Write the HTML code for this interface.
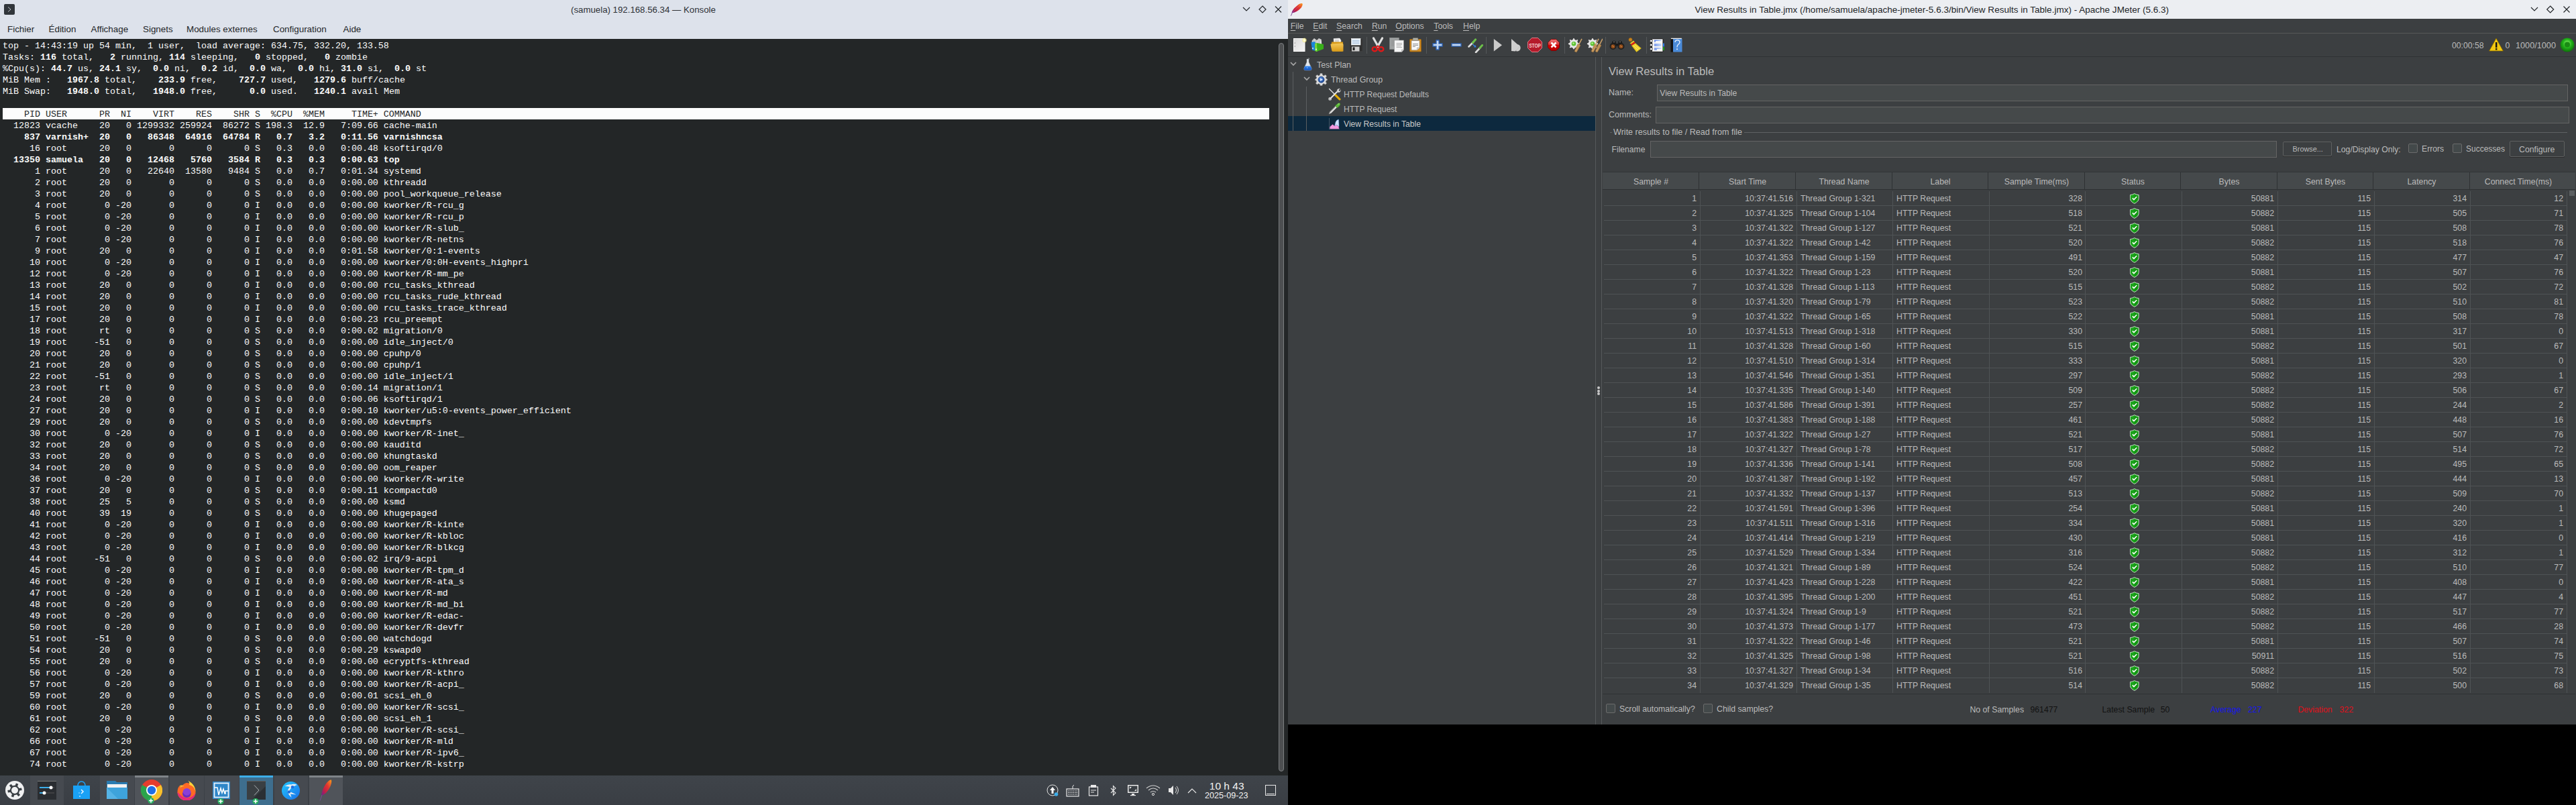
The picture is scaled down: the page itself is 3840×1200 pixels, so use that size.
<!DOCTYPE html>
<html><head><meta charset="utf-8"><title>screen</title>
<style>
*{box-sizing:border-box}
html,body{margin:0;padding:0;width:3840px;height:1200px;overflow:hidden;background:#000}
.a{position:absolute}
.t{position:absolute;white-space:pre;line-height:1}
.mono{font-family:"Liberation Mono",monospace}
.sans{font-family:"Liberation Sans",sans-serif}
#kon{left:0;top:0;width:1920px;height:1156px;background:#232627}
#kbar{left:0;top:0;width:1920px;height:58px;background:#dde2eb}
#term{left:0;top:58px;width:1920px;height:1098px;background:#232627;overflow:hidden}
.ln{position:absolute;left:4px;height:17px;white-space:pre;font-family:"Liberation Mono",monospace;font-size:13.333px;line-height:17px;color:#fcfcfc}
.ln b{font-weight:bold}
.hdr{background:#fcfcfc;color:#232627;width:1888px}
#jm{left:1920px;top:0;width:1920px;height:1080px;background:#3c3f41}
.jt{font-family:"Liberation Sans",sans-serif;font-size:12.3px;color:#bbbbbb}
.cell{position:absolute;white-space:pre;font-family:"Liberation Sans",sans-serif;font-size:12.3px;color:#bbbbbb;line-height:22px;height:22px}
</style></head><body>
<div id="kon" class="a"><div id="kbar" class="a"><div class="a" style="left:6px;top:6px;width:16px;height:16px;background:#31363b;border-radius:2px"></div><svg class="a" style="left:6px;top:6px" width="16" height="16"><path d="M6 4.5 L10 8 L6 11.5" fill="none" stroke="#bfc4c8" stroke-width="1"/></svg><div class="t sans" style="left:851px;top:8.2px;font-size:13.26px;color:#2d3136">(samuela) 192.168.56.34 — Konsole</div><svg class="a" style="left:1849px;top:6px" width="70" height="16"><path d="M4 5 L9 10 L14 5" fill="none" stroke="#232629" stroke-width="1.2"/><path d="M33 3 L38 8 L33 13 L28 8 Z" fill="none" stroke="#232629" stroke-width="1.2"/><path d="M52 3.5 L61 12.5 M61 3.5 L52 12.5" fill="none" stroke="#232629" stroke-width="1.2"/></svg><div class="t sans" style="left:11px;top:37px;font-size:13.4px;color:#232629">Fichier</div><div class="t sans" style="left:72.5px;top:37px;font-size:13.4px;color:#232629">Édition</div><div class="t sans" style="left:135.5px;top:37px;font-size:13.4px;color:#232629">Affichage</div><div class="t sans" style="left:213px;top:37px;font-size:13.4px;color:#232629">Signets</div><div class="t sans" style="left:278px;top:37px;font-size:13.4px;color:#232629">Modules externes</div><div class="t sans" style="left:407px;top:37px;font-size:13.4px;color:#232629">Configuration</div><div class="t sans" style="left:511.5px;top:37px;font-size:13.4px;color:#232629">Aide</div></div><div id="term" class="a"><div class="ln" style="top:2px">top - 14:43:19 up 54 min,  1 user,  load average: 634.75, 332.20, 133.58</div><div class="ln" style="top:19px">Tasks: <b>116</b> total,   <b>2</b> running, <b>114</b> sleeping,   <b>0</b> stopped,   <b>0</b> zombie</div><div class="ln" style="top:36px">%Cpu(s): <b>44.7</b> us, <b>24.1</b> sy,  <b>0.0</b> ni,  <b>0.2</b> id,  <b>0.0</b> wa,  <b>0.0</b> hi, <b>31.0</b> si,  <b>0.0</b> st</div><div class="ln" style="top:53px">MiB Mem :   <b>1967.8</b> total,    <b>233.9</b> free,    <b>727.7</b> used,   <b>1279.6</b> buff/cache</div><div class="ln" style="top:70px">MiB Swap:   <b>1948.0</b> total,   <b>1948.0</b> free,      <b>0.0</b> used.   <b>1240.1</b> avail Mem</div><div class="a" style="left:4px;top:103px;width:1888px;height:17px;background:#fcfcfc"></div><div class="ln" style="top:104px;color:#232627">    PID USER      PR  NI    VIRT    RES    SHR S  %CPU  %MEM     TIME+ COMMAND</div><div class="ln" style="top:121px">  12823 vcache    20   0 1299332 259924  86272 S 198.3  12.9   7:09.66 cache-main</div><div class="ln" style="top:138px"><b>    837 varnish+  20   0   86348  64916  64784 R   0.7   3.2   0:11.56 varnishncsa</b></div><div class="ln" style="top:155px">     16 root      20   0       0      0      0 S   0.3   0.0   0:00.48 ksoftirqd/0</div><div class="ln" style="top:172px"><b>  13350 samuela   20   0   12468   5760   3584 R   0.3   0.3   0:00.63 top</b></div><div class="ln" style="top:189px">      1 root      20   0   22640  13580   9484 S   0.0   0.7   0:01.34 systemd</div><div class="ln" style="top:206px">      2 root      20   0       0      0      0 S   0.0   0.0   0:00.00 kthreadd</div><div class="ln" style="top:223px">      3 root      20   0       0      0      0 S   0.0   0.0   0:00.00 pool_workqueue_release</div><div class="ln" style="top:240px">      4 root       0 -20       0      0      0 I   0.0   0.0   0:00.00 kworker/R-rcu_g</div><div class="ln" style="top:257px">      5 root       0 -20       0      0      0 I   0.0   0.0   0:00.00 kworker/R-rcu_p</div><div class="ln" style="top:274px">      6 root       0 -20       0      0      0 I   0.0   0.0   0:00.00 kworker/R-slub_</div><div class="ln" style="top:291px">      7 root       0 -20       0      0      0 I   0.0   0.0   0:00.00 kworker/R-netns</div><div class="ln" style="top:308px">      9 root      20   0       0      0      0 I   0.0   0.0   0:01.58 kworker/0:1-events</div><div class="ln" style="top:325px">     10 root       0 -20       0      0      0 I   0.0   0.0   0:00.00 kworker/0:0H-events_highpri</div><div class="ln" style="top:342px">     12 root       0 -20       0      0      0 I   0.0   0.0   0:00.00 kworker/R-mm_pe</div><div class="ln" style="top:359px">     13 root      20   0       0      0      0 I   0.0   0.0   0:00.00 rcu_tasks_kthread</div><div class="ln" style="top:376px">     14 root      20   0       0      0      0 I   0.0   0.0   0:00.00 rcu_tasks_rude_kthread</div><div class="ln" style="top:393px">     15 root      20   0       0      0      0 I   0.0   0.0   0:00.00 rcu_tasks_trace_kthread</div><div class="ln" style="top:410px">     17 root      20   0       0      0      0 I   0.0   0.0   0:00.23 rcu_preempt</div><div class="ln" style="top:427px">     18 root      rt   0       0      0      0 S   0.0   0.0   0:00.02 migration/0</div><div class="ln" style="top:444px">     19 root     -51   0       0      0      0 S   0.0   0.0   0:00.00 idle_inject/0</div><div class="ln" style="top:461px">     20 root      20   0       0      0      0 S   0.0   0.0   0:00.00 cpuhp/0</div><div class="ln" style="top:478px">     21 root      20   0       0      0      0 S   0.0   0.0   0:00.00 cpuhp/1</div><div class="ln" style="top:495px">     22 root     -51   0       0      0      0 S   0.0   0.0   0:00.00 idle_inject/1</div><div class="ln" style="top:512px">     23 root      rt   0       0      0      0 S   0.0   0.0   0:00.14 migration/1</div><div class="ln" style="top:529px">     24 root      20   0       0      0      0 S   0.0   0.0   0:00.06 ksoftirqd/1</div><div class="ln" style="top:546px">     27 root      20   0       0      0      0 I   0.0   0.0   0:00.10 kworker/u5:0-events_power_efficient</div><div class="ln" style="top:563px">     29 root      20   0       0      0      0 S   0.0   0.0   0:00.00 kdevtmpfs</div><div class="ln" style="top:580px">     30 root       0 -20       0      0      0 I   0.0   0.0   0:00.00 kworker/R-inet_</div><div class="ln" style="top:597px">     32 root      20   0       0      0      0 S   0.0   0.0   0:00.00 kauditd</div><div class="ln" style="top:614px">     33 root      20   0       0      0      0 S   0.0   0.0   0:00.00 khungtaskd</div><div class="ln" style="top:631px">     34 root      20   0       0      0      0 S   0.0   0.0   0:00.00 oom_reaper</div><div class="ln" style="top:648px">     36 root       0 -20       0      0      0 I   0.0   0.0   0:00.00 kworker/R-write</div><div class="ln" style="top:665px">     37 root      20   0       0      0      0 S   0.0   0.0   0:00.11 kcompactd0</div><div class="ln" style="top:682px">     38 root      25   5       0      0      0 S   0.0   0.0   0:00.00 ksmd</div><div class="ln" style="top:699px">     40 root      39  19       0      0      0 S   0.0   0.0   0:00.00 khugepaged</div><div class="ln" style="top:716px">     41 root       0 -20       0      0      0 I   0.0   0.0   0:00.00 kworker/R-kinte</div><div class="ln" style="top:733px">     42 root       0 -20       0      0      0 I   0.0   0.0   0:00.00 kworker/R-kbloc</div><div class="ln" style="top:750px">     43 root       0 -20       0      0      0 I   0.0   0.0   0:00.00 kworker/R-blkcg</div><div class="ln" style="top:767px">     44 root     -51   0       0      0      0 S   0.0   0.0   0:00.02 irq/9-acpi</div><div class="ln" style="top:784px">     45 root       0 -20       0      0      0 I   0.0   0.0   0:00.00 kworker/R-tpm_d</div><div class="ln" style="top:801px">     46 root       0 -20       0      0      0 I   0.0   0.0   0:00.00 kworker/R-ata_s</div><div class="ln" style="top:818px">     47 root       0 -20       0      0      0 I   0.0   0.0   0:00.00 kworker/R-md</div><div class="ln" style="top:835px">     48 root       0 -20       0      0      0 I   0.0   0.0   0:00.00 kworker/R-md_bi</div><div class="ln" style="top:852px">     49 root       0 -20       0      0      0 I   0.0   0.0   0:00.00 kworker/R-edac-</div><div class="ln" style="top:869px">     50 root       0 -20       0      0      0 I   0.0   0.0   0:00.00 kworker/R-devfr</div><div class="ln" style="top:886px">     51 root     -51   0       0      0      0 S   0.0   0.0   0:00.00 watchdogd</div><div class="ln" style="top:903px">     54 root      20   0       0      0      0 S   0.0   0.0   0:00.29 kswapd0</div><div class="ln" style="top:920px">     55 root      20   0       0      0      0 S   0.0   0.0   0:00.00 ecryptfs-kthread</div><div class="ln" style="top:937px">     56 root       0 -20       0      0      0 I   0.0   0.0   0:00.00 kworker/R-kthro</div><div class="ln" style="top:954px">     57 root       0 -20       0      0      0 I   0.0   0.0   0:00.00 kworker/R-acpi_</div><div class="ln" style="top:971px">     59 root      20   0       0      0      0 S   0.0   0.0   0:00.01 scsi_eh_0</div><div class="ln" style="top:988px">     60 root       0 -20       0      0      0 I   0.0   0.0   0:00.00 kworker/R-scsi_</div><div class="ln" style="top:1005px">     61 root      20   0       0      0      0 S   0.0   0.0   0:00.00 scsi_eh_1</div><div class="ln" style="top:1022px">     62 root       0 -20       0      0      0 I   0.0   0.0   0:00.00 kworker/R-scsi_</div><div class="ln" style="top:1039px">     66 root       0 -20       0      0      0 I   0.0   0.0   0:00.00 kworker/R-mld</div><div class="ln" style="top:1056px">     67 root       0 -20       0      0      0 I   0.0   0.0   0:00.00 kworker/R-ipv6_</div><div class="ln" style="top:1073px">     74 root       0 -20       0      0      0 I   0.0   0.0   0:00.00 kworker/R-kstrp</div><div class="a" style="left:1906px;top:6px;width:8px;height:1086px;border:1px solid #7b7e80;border-radius:5px;background:#4d4f51"></div></div></div><div class="a" style="left:1920px;top:0px;width:1920px;height:1080px;background:#3c3f41;"></div><div class="a" style="left:1920px;top:0px;width:1920px;height:28px;background:#eceef2;"></div><svg class="a" style="left:1922px;top:3px" width="22" height="22" viewBox="0 0 22 22"><defs><linearGradient id="fg" x1="0" y1="1" x2="1" y2="0"><stop offset="0" stop-color="#6d1f8f"/><stop offset="0.3" stop-color="#c01f48"/><stop offset="0.6" stop-color="#e0352f"/><stop offset="1" stop-color="#f99b1c"/></linearGradient></defs><path d="M3.6 16.2 C3.8 12.5 8 8.2 11.8 5.2 C14.6 3 17.2 1.8 19.2 2.2 C20.4 3.4 19.4 6.6 16.4 9.8 C13 13.2 8.2 16.2 3.6 16.2Z" fill="url(#fg)"/><path d="M2.4 20.6 L4.6 15.4" stroke="#7d4a9a" stroke-width="1"/><path d="M5 15 C9 11 13 7 17.5 3.5" stroke="#f7c0c0" stroke-width="0.4" opacity="0.6" fill="none"/></svg><div class="t sans" style="left:2526.40px;top:7.54px;font-size:13.54px;color:#232629;">View Results in Table.jmx (/home/samuela/apache-jmeter-5.6.3/bin/View Results in Table.jmx) - Apache JMeter (5.6.3)</div><svg class="a" style="left:3770px;top:6px" width="70" height="16"><path d="M3 5 L8 10 L13 5" fill="none" stroke="#232629" stroke-width="1.2"/><path d="M31.7 3 L36.7 8 L31.7 13 L26.7 8 Z" fill="none" stroke="#232629" stroke-width="1.2"/><path d="M51.5 3.5 L60.5 12.5 M60.5 3.5 L51.5 12.5" fill="none" stroke="#232629" stroke-width="1.2"/></svg><div class="t sans" style="left:1923.70px;top:32.59px;font-size:12.3px;color:#bbbbbb;"><span style="text-decoration:underline;text-underline-offset:2px">F</span>ile</div><div class="t sans" style="left:1957.30px;top:32.59px;font-size:12.3px;color:#bbbbbb;"><span style="text-decoration:underline;text-underline-offset:2px">E</span>dit</div><div class="t sans" style="left:1992.00px;top:32.59px;font-size:12.3px;color:#bbbbbb;"><span style="text-decoration:underline;text-underline-offset:2px">S</span>earch</div><div class="t sans" style="left:2044.90px;top:32.59px;font-size:12.3px;color:#bbbbbb;"><span style="text-decoration:underline;text-underline-offset:2px">R</span>un</div><div class="t sans" style="left:2080.30px;top:32.59px;font-size:12.3px;color:#bbbbbb;"><span style="text-decoration:underline;text-underline-offset:2px">O</span>ptions</div><div class="t sans" style="left:2137.30px;top:32.59px;font-size:12.3px;color:#bbbbbb;"><span style="text-decoration:underline;text-underline-offset:2px">T</span>ools</div><div class="t sans" style="left:2181.00px;top:32.59px;font-size:12.3px;color:#bbbbbb;"><span style="text-decoration:underline;text-underline-offset:2px">H</span>elp</div><div class="a" style="left:1920px;top:49px;width:1920px;height:1px;background:#575859;"></div><div class="a" style="left:1920px;top:84px;width:1920px;height:1px;background:#2f3234;"></div><div class="a" style="left:2126px;top:55px;width:1px;height:25px;background:#55585a;"></div><div class="a" style="left:2037px;top:55px;width:1px;height:25px;background:#55585a;"></div><div class="a" style="left:2215px;top:55px;width:1px;height:25px;background:#55585a;"></div><div class="a" style="left:2332px;top:55px;width:1px;height:25px;background:#55585a;"></div><div class="a" style="left:2393px;top:55px;width:1px;height:25px;background:#55585a;"></div><div class="a" style="left:2454px;top:55px;width:1px;height:25px;background:#55585a;"></div><svg class="a" width="0" height="0" style="left:0;top:0"><defs><linearGradient id="gNew" x1="0" y1="0" x2="1" y2="1"><stop offset="0" stop-color="#d9d9d9"/><stop offset="1" stop-color="#f4f4f4"/></linearGradient><radialGradient id="gGlow"><stop offset="0" stop-color="#ffffff"/><stop offset="0.45" stop-color="#fff7b0"/><stop offset="1" stop-color="#e8dc60" stop-opacity="0"/></radialGradient><linearGradient id="gFold" x1="0" y1="0" x2="0" y2="1"><stop offset="0" stop-color="#f3c75a"/><stop offset="1" stop-color="#d89a18"/></linearGradient><linearGradient id="gStop" x1="0" y1="0" x2="0" y2="1"><stop offset="0" stop-color="#ee7a7a"/><stop offset="0.45" stop-color="#d93a3a"/><stop offset="0.55" stop-color="#cc0000"/><stop offset="1" stop-color="#b80000"/></linearGradient><linearGradient id="gBlue" x1="0" y1="0" x2="1" y2="0"><stop offset="0" stop-color="#0040e0"/><stop offset="1" stop-color="#9cc4ff"/></linearGradient></defs></svg><svg class="a" style="left:1927px;top:56px" width="22" height="22" viewBox="0 0 22 22"><rect x="1.5" y="1.5" width="16.5" height="19" fill="url(#gNew)" stroke="#ffffff" stroke-width="1"/><circle cx="3.3" cy="8" r="0.6" fill="#555"/><circle cx="3.3" cy="13" r="0.6" fill="#555"/><circle cx="17.5" cy="4" r="4" fill="url(#gGlow)"/></svg><svg class="a" style="left:1954px;top:56px" width="20" height="22" viewBox="0 0 20 22"><path d="M1.5 5 L5 1 L9 4 L12 1 L16 3 L15 12 L3 12Z" fill="#d2d2d2"/><path d="M4 2 L5 9 M7 2.5 L8 9 M12 2 L12.5 9" stroke="#aaa" stroke-width="0.7"/><path d="M0.5 7 L6 6 L7.5 9 L7.5 20 L2 18.5 Z" fill="#1a86d9"/><path d="M15 5 L15.5 10" stroke="#e8e8e8" stroke-width="1.5"/><path d="M6 9 L9 8 L19 10 L19 17 L8.5 21 L6.5 20Z" fill="#39b01a"/><path d="M6 9 L9 8 L9.5 21 L6.5 20Z" fill="#7ad63b"/><circle cx="3" cy="16" r="0.9" fill="#fff"/><circle cx="8" cy="17.5" r="0.9" fill="#fff"/></svg><svg class="a" style="left:1983px;top:56px" width="21" height="22" viewBox="0 0 21 22"><path d="M5 1.5 L14 1 L16 4 L15.5 12 L5.5 12Z" fill="#f5f5f5" stroke="#ddd" stroke-width="0.5"/><path d="M7 4 H13 M7 6 H13 M7 8.5 H13" stroke="#9a9a9a" stroke-width="0.7"/><path d="M2 6.5 L19 6.5 L19.5 20.5 L3 20.5 L1.5 14Z" fill="#d89a18"/><path d="M0.5 10.5 Q0 9.5 1.5 9.5 L17 8.5 Q19.5 8.5 19.5 11 L19 19.5 Q19 20.7 17.5 20.7 L4 20.7 Q2.5 20.7 2.2 19Z" fill="url(#gFold)"/></svg><svg class="a" style="left:2011px;top:56px" width="20" height="22" viewBox="0 0 20 22"><path d="M1 1.5 H19 L20 2.5 V20.5 H1Z" fill="#2f2f2f" stroke="#444" stroke-width="0.6"/><rect x="3.5" y="1.5" width="13.5" height="9.5" fill="#e6eff8" stroke="#fff" stroke-width="0.6"/><path d="M5 4.5 H15.5 M5 6.5 H15.5 M5 8.5 H15.5" stroke="#9ab6d4" stroke-width="0.8"/><rect x="4" y="13.5" width="11.5" height="7" fill="#cfcfcf"/><rect x="5.5" y="14.5" width="3" height="4.5" fill="#1e1e1e"/></svg><svg class="a" style="left:2044px;top:55px" width="20" height="23" viewBox="0 0 20 23"><path d="M3.5 2 L10.5 14.5 M16.5 2 L9.5 14.5" stroke="#e0e0e0" stroke-width="3.2" stroke-linecap="round"/><circle cx="10" cy="14.5" r="0.8" fill="#222"/><ellipse cx="5.2" cy="18.2" rx="3.5" ry="3.1" fill="none" stroke="#e01818" stroke-width="2.4"/><ellipse cx="14.8" cy="18.2" rx="3.5" ry="3.1" fill="none" stroke="#e01818" stroke-width="2.4"/><path d="M8 15.5 L10 13 L12 15.5" stroke="#e01818" stroke-width="1.6" fill="none"/></svg><svg class="a" style="left:2071px;top:56px" width="23" height="22" viewBox="0 0 23 22"><rect x="0.5" y="0.2" width="14" height="17.3" fill="#a0a3a3" stroke="#8a8c8c" stroke-width="0.5"/><path d="M3 4 H11 M3 6 H11 M3 8 H11 M3 10 H11 M3 12 H11" stroke="#868888" stroke-width="0.6"/><path d="M7.5 4 H21.5 V18 L18.5 21.5 H7.5Z" fill="#f6f6f6" stroke="#8f8f8f" stroke-width="0.6"/><path d="M18.5 21.5 V18 H21.5" fill="#d8d8d8" stroke="#8f8f8f" stroke-width="0.5"/><path d="M10.5 8.5 H19 M10.5 10.5 H19 M10.5 12.5 H17.5 M10.5 14.5 H19" stroke="#8f8f8f" stroke-width="0.7"/></svg><svg class="a" style="left:2101px;top:56px" width="18" height="22" viewBox="0 0 18 22"><rect x="0.5" y="2.5" width="17" height="18.5" rx="1" fill="#d38d21" stroke="#9b5f0c" stroke-width="0.8"/><path d="M3 4.5 H15 V15 L11.5 18.8 H3Z" fill="#f8f8f8" stroke="#777" stroke-width="0.5"/><path d="M11.5 18.8 V15 H15" fill="#ddd" stroke="#888" stroke-width="0.5"/><path d="M5 9.5 H13 M5 11.5 H13 M5 13.5 H9" stroke="#777" stroke-width="0.8"/><path d="M5.5 0.5 H12.5 L13.5 4 H4.5Z" fill="#b3b3a6" stroke="#666" stroke-width="0.5"/></svg><svg class="a" style="left:2135px;top:59px" width="16" height="16" viewBox="0 0 16 16"><path d="M6 1 H10 V6 H15 V10 H10 V15 H6 V10 H1 V6 H6Z" fill="#c6daf2" stroke="#2d64b8" stroke-width="1.3"/></svg><svg class="a" style="left:2163px;top:64px" width="16" height="6" viewBox="0 0 16 6"><rect x="1" y="1" width="14" height="4" fill="#c6daf2" stroke="#2d64b8" stroke-width="1.3"/></svg><svg class="a" style="left:2188px;top:56px" width="23" height="23" viewBox="0 0 23 23"><path d="M1.5 13.5 L8 7" stroke="#dcdcdc" stroke-width="2.6" stroke-linecap="round"/><path d="M7.5 7.5 L11.5 3" stroke="#6cbf4a" stroke-width="3.2" stroke-linecap="round"/><path d="M7.5 10 L11 13.5" stroke="#3d8ef0" stroke-width="1.1"/><path d="M9 14.5 L12.5 14.5 L11.5 11Z" fill="#2d7ee6"/><path d="M12 22 L18.5 15" stroke="#dcdcdc" stroke-width="2.6" stroke-linecap="round"/><path d="M18 15.5 L21.5 11.5" stroke="#6cbf4a" stroke-width="3" stroke-linecap="round"/></svg><svg class="a" style="left:2226px;top:57px" width="14" height="21" viewBox="0 0 14 21"><path d="M0.8 1 L13 10.2 L0.8 19.4Z" fill="#cbcbcb"/></svg><svg class="a" style="left:2252px;top:57px" width="16" height="21" viewBox="0 0 16 21"><path d="M1 1 L10 9 C14 10 15 13 14.5 15.5 C14 18.5 11 20 8.5 19.5 L8 18 L7 19.5 L1 19Z" fill="#cfcfcf"/><path d="M8 18 L13 13" stroke="#bdbdbd" stroke-width="0.7"/></svg><svg class="a" style="left:2277px;top:56px" width="22" height="22" viewBox="0 0 22 22"><path d="M6.5 0.5 H15.5 L21.5 6.5 V15.5 L15.5 21.5 H6.5 L0.5 15.5 V6.5Z" fill="#b51b2b" stroke="#e58a94" stroke-width="0.9"/><text x="11" y="14.6" font-family="Liberation Sans" font-weight="bold" font-size="8.6" fill="#f5d5d8" text-anchor="middle" textLength="17.5" lengthAdjust="spacingAndGlyphs">STOP</text></svg><svg class="a" style="left:2307px;top:58px" width="18" height="18" viewBox="0 0 18 18"><path d="M5.3 0.5 H12.7 L17.5 5.3 V12.7 L12.7 17.5 H5.3 L0.5 12.7 V5.3Z" fill="url(#gStop)" stroke="#7a0000" stroke-width="0.9"/><path d="M5.5 5.5 L12.5 12.5 M12.5 5.5 L5.5 12.5" stroke="#fff" stroke-width="2.6"/></svg><svg class="a" style="left:2337px;top:56px" width="23" height="23" viewBox="0 0 23 23"><path d="M8 0.5 L10 0.8 L10.6 2.8 L12.5 3.6 L14.3 2.6 L15.7 4 L14.7 5.8 L15.5 7.7 L17.5 8.3 V10.3 L15.5 10.9 L14.7 12.8 L15.7 14.6 L14.3 16 L12.5 15 L10.6 15.8 L10 17.8 H8 L7.4 15.8 L5.5 15 L3.7 16 L2.3 14.6 L3.3 12.8 L2.5 10.9 L0.5 10.3 V8.3 L2.5 7.7 L3.3 5.8 L2.3 4 L3.7 2.6 L5.5 3.6 L7.4 2.8Z" fill="#e6e6e6" stroke="#1b1b1b" stroke-width="0.6"/><circle cx="9" cy="9.3" r="3.3" fill="#5cc233"/><circle cx="8.5" cy="8.5" r="1.3" fill="#b6f08c"/><g transform="translate(7,1)"><path d="M6 21 L3 19.5 L8 8.5 L12 10.5Z" fill="#c99a5e" stroke="#8b6434" stroke-width="0.5"/><path d="M9.5 9.5 L14 0.8" stroke="#c9a06a" stroke-width="1.6"/><path d="M5 17 L9 10 M7 19 L10.5 10.5" stroke="#a07640" stroke-width="0.5"/></g></svg><svg class="a" style="left:2365px;top:56px" width="24" height="23" viewBox="0 0 24 23"><path d="M8 0.5 L10 0.8 L10.6 2.8 L12.5 3.6 L14.3 2.6 L15.7 4 L14.7 5.8 L15.5 7.7 L17.5 8.3 V10.3 L15.5 10.9 L14.7 12.8 L15.7 14.6 L14.3 16 L12.5 15 L10.6 15.8 L10 17.8 H8 L7.4 15.8 L5.5 15 L3.7 16 L2.3 14.6 L3.3 12.8 L2.5 10.9 L0.5 10.3 V8.3 L2.5 7.7 L3.3 5.8 L2.3 4 L3.7 2.6 L5.5 3.6 L7.4 2.8Z" fill="#e6e6e6" stroke="#1b1b1b" stroke-width="0.6"/><circle cx="9" cy="9.3" r="3.3" fill="#5cc233"/><circle cx="8.5" cy="8.5" r="1.3" fill="#b6f08c"/><g transform="translate(4,1)"><path d="M6 21 L3 19.5 L8 8.5 L12 10.5Z" fill="#c99a5e" stroke="#8b6434" stroke-width="0.5"/><path d="M9.5 9.5 L14 0.8" stroke="#c9a06a" stroke-width="1.6"/><path d="M5 17 L9 10 M7 19 L10.5 10.5" stroke="#a07640" stroke-width="0.5"/></g><g transform="translate(10,1)"><path d="M6 21 L3 19.5 L8 8.5 L12 10.5Z" fill="#c99a5e" stroke="#8b6434" stroke-width="0.5"/><path d="M9.5 9.5 L14 0.8" stroke="#c9a06a" stroke-width="1.6"/><path d="M5 17 L9 10 M7 19 L10.5 10.5" stroke="#a07640" stroke-width="0.5"/></g></svg><svg class="a" style="left:2399px;top:59px" width="23" height="16" viewBox="0 0 23 16"><path d="M5 2 H9 L10 6 H13 L14 2 H18 L21 9 L12.5 9.5 L10.5 9.5 L2 9Z" fill="#1b1b1b"/><circle cx="5.5" cy="10" r="5" fill="#202020"/><circle cx="17.5" cy="10" r="5" fill="#202020"/><circle cx="5.5" cy="10.3" r="3" fill="#8f4a18"/><circle cx="17.5" cy="10.3" r="3" fill="#8f4a18"/><path d="M4 9 L7 11 M16 9 L19 11" stroke="#e2a060" stroke-width="0.7"/><path d="M6 3.5 H8 M15 3.5 H17" stroke="#aaa" stroke-width="0.8"/></svg><svg class="a" style="left:2427px;top:56px" width="22" height="22" viewBox="0 0 22 22"><circle cx="3.5" cy="3.2" r="2.6" fill="#c8851e" stroke="#9a5f10" stroke-width="0.6"/><path d="M2.5 8.5 L8 4.5 L10 6.5 L5 10Z" fill="#e3cc2c"/><path d="M3.8 10 L9.6 6 L11 8.5 L5.3 12Z" fill="#dd1818"/><path d="M5.3 12 L11 8.5 L19.5 16 L12.5 21.5Z" fill="#f0d22a" stroke="#b89a08" stroke-width="0.6"/><path d="M8 12 L15 19 M10 10.5 L17 17.5" stroke="#fff3a0" stroke-width="0.6"/></svg><svg class="a" style="left:2459px;top:57px" width="23" height="21" viewBox="0 0 23 21"><rect x="3.5" y="0.8" width="16.5" height="19.5" rx="0.8" fill="#f6f6f6" stroke="#111" stroke-width="1"/><path d="M7 3.2 H17.5 M7 5 H9 M7 9 H17.5 M7 11 H17.5 M7 15 H17.5 M7 17 H11" stroke="url(#gBlue)" stroke-width="1.1"/><rect x="0.5" y="2.5" width="4" height="3" fill="#eee" stroke="#222" stroke-width="0.5"/><rect x="0.5" y="8.5" width="4" height="3" fill="#eee" stroke="#222" stroke-width="0.5"/><rect x="0.5" y="14.5" width="4" height="3" fill="#eee" stroke="#222" stroke-width="0.5"/><rect x="20" y="7.5" width="2" height="5" fill="#2a7ae8"/><rect x="20" y="13" width="2" height="5" fill="#1c9a1c"/></svg><svg class="a" style="left:2490px;top:56px" width="18" height="22" viewBox="0 0 18 22"><rect x="0.5" y="1" width="4.5" height="20.5" fill="#141414"/><rect x="4" y="1.5" width="13.5" height="20" fill="#4a8ad8"/><rect x="0.8" y="0.8" width="16" height="1.3" fill="#f0f0f0"/><path d="M7 7 Q7 3.8 10.5 3.8 Q14 3.8 14 7 Q14 9 11.5 10.5 Q10 11.5 10 14.5" fill="none" stroke="#eef4ff" stroke-width="1.3"/><circle cx="10" cy="17.3" r="1" fill="#eef4ff"/></svg><div class="t sans" style="left:3655.00px;top:62.15px;font-size:12.23px;color:#bbbbbb;">00:00:58</div><svg class="a" style="left:3710px;top:56px" width="22" height="21" viewBox="0 0 22 21"><path d="M11 1 L21.5 20 H0.5Z" fill="#f2c811" stroke="#7a5d00" stroke-width="0.8"/><rect x="10" y="7" width="2.4" height="8" fill="#111"/><rect x="10" y="16" width="2.4" height="2.4" fill="#111"/></svg><div class="t sans" style="left:3734.50px;top:62.09px;font-size:12.3px;color:#bbbbbb;">0</div><div class="t sans" style="left:3750.00px;top:61.76px;font-size:12.69px;color:#bbbbbb;">1000/1000</div><svg class="a" style="left:3816px;top:56px" width="22" height="22" viewBox="0 0 22 22"><defs><radialGradient id="gb" cx="0.5" cy="0.4" r="0.6"><stop offset="0" stop-color="#9dff7a"/><stop offset="0.5" stop-color="#22b21a"/><stop offset="1" stop-color="#0d6e0a"/></radialGradient></defs><circle cx="11" cy="11" r="10.5" fill="url(#gb)"/><circle cx="11" cy="10.5" r="4" fill="#1a8a14"/></svg><div class="a" style="left:2378px;top:85px;width:1px;height:995px;background:#56595b;"></div><div class="a" style="left:2387px;top:85px;width:1px;height:995px;background:#56595b;"></div><div class="a" style="left:2381px;top:576px;width:4px;height:4px;border-radius:2px;background:#c8c8c8"></div><div class="a" style="left:2381px;top:580.5px;width:4px;height:4px;border-radius:2px;background:#c8c8c8"></div><div class="a" style="left:2381px;top:585px;width:4px;height:4px;border-radius:2px;background:#c8c8c8"></div><div class="a" style="left:1920px;top:173px;width:458px;height:22px;background:#0d293e;"></div><div class="a" style="left:1927px;top:107px;width:1px;height:88px;background:#5c5f61;"></div><div class="a" style="left:1947px;top:129px;width:1px;height:66px;background:#5c5f61;"></div><svg class="a" style="left:1923px;top:92px" width="10" height="7" viewBox="0 0 10 7"><path d="M1 1 L5 5 L9 1" fill="none" stroke="#a9a9a9" stroke-width="1.6"/></svg><svg class="a" style="left:1943px;top:114px" width="10" height="7" viewBox="0 0 10 7"><path d="M1 1 L5 5 L9 1" fill="none" stroke="#a9a9a9" stroke-width="1.6"/></svg><svg class="a" style="left:1943px;top:86px" width="13" height="20" viewBox="0 0 13 20"><defs><linearGradient id="gFl" x1="0" y1="0" x2="0" y2="1"><stop offset="0" stop-color="#3b8cf0"/><stop offset="1" stop-color="#0a4fc0"/></linearGradient></defs><path d="M5 2 H8 V6.5 L12 15.5 Q12.8 18.8 10 18.8 H3 Q0.2 18.8 1 15.5 L5 6.5Z" fill="#e4e8ec" stroke="#9aa0a6" stroke-width="0.5"/><path d="M2.2 12.5 H10.8 L12 15.5 Q12.8 18.8 10 18.8 H3 Q0.2 18.8 1 15.5Z" fill="url(#gFl)"/><path d="M7.8 0.5 L8.6 2.2" stroke="#cfd3d6" stroke-width="0.8"/><path d="M5.5 14 L6 16" stroke="#9cc6ff" stroke-width="0.8"/></svg><svg class="a" style="left:1960px;top:109px" width="19" height="19" viewBox="0 0 19 19"><defs><radialGradient id="gTg" cx="0.45" cy="0.4" r="0.6"><stop offset="0" stop-color="#6fa0e8"/><stop offset="1" stop-color="#123f8f"/></radialGradient></defs><path d="M8 0.5 H11 L11.5 3 L13.6 3.9 L15.6 2.4 L17.6 4.4 L16.1 6.4 L17 8.5 L18.5 9 V10.5 L17 11 L16.1 13.1 L17.6 15.1 L15.6 17.1 L13.6 15.6 L11.5 16.5 L11 18.5 H8 L7.5 16.5 L5.4 15.6 L3.4 17.1 L1.4 15.1 L2.9 13.1 L2 11 L0.5 10.5 V9 L2 8.5 L2.9 6.4 L1.4 4.4 L3.4 2.4 L5.4 3.9 L7.5 3Z" fill="#dcdcdc" stroke="#9a9a9a" stroke-width="0.5"/><circle cx="9.5" cy="9.7" r="4.6" fill="url(#gTg)" stroke="#0c2f6e" stroke-width="0.5"/><path d="M8 7.5 L12 9.7 L8 11.9Z" fill="#d8e6ff"/></svg><svg class="a" style="left:1980px;top:131px" width="19" height="19" viewBox="0 0 19 19"><path d="M1.5 1.5 L9.5 9.5" stroke="#e8e8e8" stroke-width="1.3" stroke-linecap="round"/><path d="M10 10 L17 17" stroke="#f2b600" stroke-width="3" stroke-linecap="round"/><path d="M10 10 L17 17" stroke="#8a6000" stroke-width="0.5" stroke-linecap="round" opacity="0.6"/><path d="M2.5 16.5 L13.5 5.5" stroke="#e6e6e6" stroke-width="2" stroke-linecap="round"/><circle cx="2.6" cy="16.4" r="1.8" fill="none" stroke="#d0d0d0" stroke-width="1.2"/><path d="M13 3.5 Q14 0.5 17.5 1 L15.5 3.2 L16 4.5 L17.5 5 L18.5 2.5 Q19 6.5 15 7Z" fill="#e6e6e6" stroke="#999" stroke-width="0.4"/></svg><svg class="a" style="left:1980px;top:153px" width="19" height="18" viewBox="0 0 19 18"><path d="M1 17 L2.5 13.5 L11 5 L13 7 L4.5 15.5Z" fill="#e4e4e4" stroke="#8a8a8a" stroke-width="0.5"/><path d="M2.5 14.5 L10.5 6.5" stroke="#777" stroke-width="0.6"/><path d="M10.5 4.5 L14 1.5 Q16.5 0 17.5 1 Q18.5 2 17 4.5 L13.5 8Z" fill="#5cb83a" stroke="#3a7a22" stroke-width="0.5"/><path d="M14 2.5 Q16 1.2 16.8 2" stroke="#b8f090" stroke-width="0.8" fill="none"/></svg><svg class="a" style="left:1980px;top:176px" width="18" height="18" viewBox="0 0 18 18"><path d="M1.5 0.5 V16.5 H17" stroke="#bdbdbd" stroke-width="0.6" fill="none" stroke-dasharray="1 1"/><path d="M2.5 16 L2.5 13 L6.5 9.5 L9.5 12 L12 10 L15.5 12.5 L16 16Z" fill="#f29ae0" stroke="#d060b0" stroke-width="0.4"/><path d="M9.5 12 L11 6 Q12.5 2.5 15.5 2.2 L16 12.5 L12 10Z" fill="#cfe2ff" stroke="#7aa8e8" stroke-width="0.4"/></svg><div class="t sans" style="left:1963.00px;top:91.00px;font-size:12.4px;color:#bbbbbb;">Test Plan</div><div class="t sans" style="left:1984.00px;top:112.50px;font-size:12.4px;color:#bbbbbb;">Thread Group</div><div class="t sans" style="left:2003.00px;top:134.80px;font-size:12.05px;color:#bbbbbb;">HTTP Request Defaults</div><div class="t sans" style="left:2003.00px;top:156.80px;font-size:12.05px;color:#bbbbbb;">HTTP Request</div><div class="t sans" style="left:2003.00px;top:178.72px;font-size:12.15px;color:#c8c8c8;">View Results in Table</div><div class="t sans" style="left:2398.00px;top:98.92px;font-size:16.63px;color:#bbbbbb;">View Results in Table</div><div class="t sans" style="left:2398.00px;top:132.37px;font-size:12.56px;color:#bbbbbb;">Name:</div><div class="a" style="left:2470px;top:126px;width:1358px;height:25px;background:#45494a;border:1px solid #646464"></div><div class="t sans" style="left:2474.30px;top:132.72px;font-size:12.15px;color:#bbbbbb;">View Results in Table</div><div class="t sans" style="left:2398.00px;top:165.40px;font-size:12.52px;color:#bbbbbb;">Comments:</div><div class="a" style="left:2468px;top:159px;width:1362px;height:25px;background:#45494a;border:1px solid #646464"></div><div class="a" style="left:2400px;top:197px;width:3px;height:1px;background:#5e6163;"></div><div class="t sans" style="left:2405.00px;top:191.35px;font-size:12.58px;color:#bbbbbb;">Write results to file / Read from file</div><div class="a" style="left:2600px;top:197px;width:1227px;height:1px;background:#5e6163;"></div><div class="t sans" style="left:2402.50px;top:216.71px;font-size:12.16px;color:#bbbbbb;">Filename</div><div class="a" style="left:2460px;top:210px;width:934px;height:25px;background:#45494a;border:1px solid #646464"></div><div class="a" style="left:3403px;top:211px;width:73px;height:22px;background:#3c3f41;border:1px solid #5e6060;border-radius:2px;box-shadow:0 1px 0 #2b2b2b"></div><div class="t sans" style="left:3417.50px;top:216.77px;font-size:10.9px;color:#bbbbbb;">Browse...</div><div class="t sans" style="left:3483.00px;top:216.66px;font-size:12.22px;color:#bbbbbb;">Log/Display Only:</div><div class="a" style="left:3590px;top:214px;width:14px;height:14px;background:#43494a;border:1px solid #6b6b6b;border-radius:2px"></div><div class="t sans" style="left:3610.00px;top:215.67px;font-size:12.2px;color:#bbbbbb;">Errors</div><div class="a" style="left:3656px;top:214px;width:14px;height:14px;background:#43494a;border:1px solid #6b6b6b;border-radius:2px"></div><div class="t sans" style="left:3676.00px;top:215.85px;font-size:11.99px;color:#bbbbbb;">Successes</div><div class="a" style="left:3741px;top:210px;width:82px;height:24px;background:#3c3f41;border:1px solid #5e6060;border-radius:2px;box-shadow:0 1px 0 #2b2b2b"></div><div class="t sans" style="left:3755.00px;top:216.59px;font-size:12.3px;color:#bbbbbb;">Configure</div><div class="a" style="left:2389px;top:256px;width:1450px;height:27px;background:#45494b;border-top:1px solid #323537;border-bottom:1px solid #2e3133"></div><div class="a" style="left:2532px;top:257px;width:1px;height:25px;background:#2e3133;"></div><div class="a" style="left:2676px;top:257px;width:1px;height:25px;background:#2e3133;"></div><div class="a" style="left:2820px;top:257px;width:1px;height:25px;background:#2e3133;"></div><div class="a" style="left:2963px;top:257px;width:1px;height:25px;background:#2e3133;"></div><div class="a" style="left:3107px;top:257px;width:1px;height:25px;background:#2e3133;"></div><div class="a" style="left:3250px;top:257px;width:1px;height:25px;background:#2e3133;"></div><div class="a" style="left:3394px;top:257px;width:1px;height:25px;background:#2e3133;"></div><div class="a" style="left:3537px;top:257px;width:1px;height:25px;background:#2e3133;"></div><div class="a" style="left:3681px;top:257px;width:1px;height:25px;background:#2e3133;"></div><div class="t sans" style="left:2389px;top:264.59px;width:144px;text-align:center;font-size:12.3px;color:#bbbbbb">Sample #</div><div class="t sans" style="left:2533px;top:264.59px;width:144px;text-align:center;font-size:12.3px;color:#bbbbbb">Start Time</div><div class="t sans" style="left:2677px;top:264.59px;width:144px;text-align:center;font-size:12.3px;color:#bbbbbb">Thread Name</div><div class="t sans" style="left:2821px;top:264.59px;width:143px;text-align:center;font-size:12.3px;color:#bbbbbb">Label</div><div class="t sans" style="left:2964px;top:264.59px;width:144px;text-align:center;font-size:12.3px;color:#bbbbbb">Sample Time(ms)</div><div class="t sans" style="left:3108px;top:264.59px;width:143px;text-align:center;font-size:12.3px;color:#bbbbbb">Status</div><div class="t sans" style="left:3251px;top:264.59px;width:144px;text-align:center;font-size:12.3px;color:#bbbbbb">Bytes</div><div class="t sans" style="left:3395px;top:264.59px;width:143px;text-align:center;font-size:12.3px;color:#bbbbbb">Sent Bytes</div><div class="t sans" style="left:3538px;top:264.59px;width:144px;text-align:center;font-size:12.3px;color:#bbbbbb">Latency</div><div class="t sans" style="left:3682px;top:264.59px;width:144px;text-align:center;font-size:12.3px;color:#bbbbbb">Connect Time(ms)</div><div class="a" style="left:2534px;top:285px;width:1px;height:748px;background:#4f5355;"></div><div class="a" style="left:2678px;top:285px;width:1px;height:748px;background:#4f5355;"></div><div class="a" style="left:2821px;top:285px;width:1px;height:748px;background:#4f5355;"></div><div class="a" style="left:2965px;top:285px;width:1px;height:748px;background:#4f5355;"></div><div class="a" style="left:3108px;top:285px;width:1px;height:748px;background:#4f5355;"></div><div class="a" style="left:3252px;top:285px;width:1px;height:748px;background:#4f5355;"></div><div class="a" style="left:3395px;top:285px;width:1px;height:748px;background:#4f5355;"></div><div class="a" style="left:3539px;top:285px;width:1px;height:748px;background:#4f5355;"></div><div class="a" style="left:3682px;top:285px;width:1px;height:748px;background:#4f5355;"></div><div class="a" style="left:3826px;top:285px;width:1px;height:748px;background:#4f5355;"></div><div class="a" style="left:2391px;top:306px;width:1435px;height:1px;background:#4f5355;"></div><div class="a" style="left:2391px;top:328px;width:1435px;height:1px;background:#4f5355;"></div><div class="a" style="left:2391px;top:350px;width:1435px;height:1px;background:#4f5355;"></div><div class="a" style="left:2391px;top:372px;width:1435px;height:1px;background:#4f5355;"></div><div class="a" style="left:2391px;top:394px;width:1435px;height:1px;background:#4f5355;"></div><div class="a" style="left:2391px;top:416px;width:1435px;height:1px;background:#4f5355;"></div><div class="a" style="left:2391px;top:438px;width:1435px;height:1px;background:#4f5355;"></div><div class="a" style="left:2391px;top:460px;width:1435px;height:1px;background:#4f5355;"></div><div class="a" style="left:2391px;top:482px;width:1435px;height:1px;background:#4f5355;"></div><div class="a" style="left:2391px;top:504px;width:1435px;height:1px;background:#4f5355;"></div><div class="a" style="left:2391px;top:526px;width:1435px;height:1px;background:#4f5355;"></div><div class="a" style="left:2391px;top:548px;width:1435px;height:1px;background:#4f5355;"></div><div class="a" style="left:2391px;top:570px;width:1435px;height:1px;background:#4f5355;"></div><div class="a" style="left:2391px;top:592px;width:1435px;height:1px;background:#4f5355;"></div><div class="a" style="left:2391px;top:614px;width:1435px;height:1px;background:#4f5355;"></div><div class="a" style="left:2391px;top:636px;width:1435px;height:1px;background:#4f5355;"></div><div class="a" style="left:2391px;top:658px;width:1435px;height:1px;background:#4f5355;"></div><div class="a" style="left:2391px;top:680px;width:1435px;height:1px;background:#4f5355;"></div><div class="a" style="left:2391px;top:702px;width:1435px;height:1px;background:#4f5355;"></div><div class="a" style="left:2391px;top:724px;width:1435px;height:1px;background:#4f5355;"></div><div class="a" style="left:2391px;top:746px;width:1435px;height:1px;background:#4f5355;"></div><div class="a" style="left:2391px;top:768px;width:1435px;height:1px;background:#4f5355;"></div><div class="a" style="left:2391px;top:790px;width:1435px;height:1px;background:#4f5355;"></div><div class="a" style="left:2391px;top:812px;width:1435px;height:1px;background:#4f5355;"></div><div class="a" style="left:2391px;top:834px;width:1435px;height:1px;background:#4f5355;"></div><div class="a" style="left:2391px;top:856px;width:1435px;height:1px;background:#4f5355;"></div><div class="a" style="left:2391px;top:878px;width:1435px;height:1px;background:#4f5355;"></div><div class="a" style="left:2391px;top:900px;width:1435px;height:1px;background:#4f5355;"></div><div class="a" style="left:2391px;top:922px;width:1435px;height:1px;background:#4f5355;"></div><div class="a" style="left:2391px;top:944px;width:1435px;height:1px;background:#4f5355;"></div><div class="a" style="left:2391px;top:966px;width:1435px;height:1px;background:#4f5355;"></div><div class="a" style="left:2391px;top:988px;width:1435px;height:1px;background:#4f5355;"></div><div class="a" style="left:2391px;top:1010px;width:1435px;height:1px;background:#4f5355;"></div><div class="a" style="left:2389px;top:1034px;width:1450px;height:1px;background:#2f3234;"></div><div class="a" style="left:3830px;top:284px;width:8px;height:8px;background:#5b5f61;"></div><div class="t sans" style="left:2329px;top:289.59px;width:200px;text-align:right;font-size:12.3px;color:#bbbbbb">1</div><div class="t sans" style="left:2473px;top:289.59px;width:200px;text-align:right;font-size:12.3px;color:#bbbbbb">10:37:41.516</div><div class="t sans" style="left:2684px;top:289.59px;font-size:12.3px;color:#bbbbbb">Thread Group 1-321</div><div class="t sans" style="left:2827px;top:289.59px;font-size:12.3px;color:#bbbbbb">HTTP Request</div><div class="t sans" style="left:2904px;top:289.59px;width:200px;text-align:right;font-size:12.3px;color:#bbbbbb">328</div><svg class="a" style="left:3174.5px;top:287.5px" width="14" height="16" viewBox="0 0 14 16"><path d="M6.8 0.6 Q9.6 2.4 13.2 2.6 V7.6 C13.2 11 10.6 13.6 6.8 15.4 C3 13.6 0.4 11 0.4 7.6 V2.6 Q4 2.4 6.8 0.6Z" fill="#1aa31a" stroke="#d8e8d8" stroke-width="0.9"/><path d="M6.8 2.2 Q9 3.5 11.8 3.7 V7.6 C11.8 10.4 9.8 12.6 6.8 14 Z" fill="#0b8a0b" opacity="0.6"/><path d="M3.8 7.4 L6 9.6 L10.2 5.2" fill="none" stroke="#ffffff" stroke-width="1.6"/></svg><div class="t sans" style="left:3190px;top:289.59px;width:200px;text-align:right;font-size:12.3px;color:#bbbbbb">50881</div><div class="t sans" style="left:3334px;top:289.59px;width:200px;text-align:right;font-size:12.3px;color:#bbbbbb">115</div><div class="t sans" style="left:3477px;top:289.59px;width:200px;text-align:right;font-size:12.3px;color:#bbbbbb">314</div><div class="t sans" style="left:3621px;top:289.59px;width:200px;text-align:right;font-size:12.3px;color:#bbbbbb">12</div><div class="t sans" style="left:2329px;top:311.59px;width:200px;text-align:right;font-size:12.3px;color:#bbbbbb">2</div><div class="t sans" style="left:2473px;top:311.59px;width:200px;text-align:right;font-size:12.3px;color:#bbbbbb">10:37:41.325</div><div class="t sans" style="left:2684px;top:311.59px;font-size:12.3px;color:#bbbbbb">Thread Group 1-104</div><div class="t sans" style="left:2827px;top:311.59px;font-size:12.3px;color:#bbbbbb">HTTP Request</div><div class="t sans" style="left:2904px;top:311.59px;width:200px;text-align:right;font-size:12.3px;color:#bbbbbb">518</div><svg class="a" style="left:3174.5px;top:309.5px" width="14" height="16" viewBox="0 0 14 16"><path d="M6.8 0.6 Q9.6 2.4 13.2 2.6 V7.6 C13.2 11 10.6 13.6 6.8 15.4 C3 13.6 0.4 11 0.4 7.6 V2.6 Q4 2.4 6.8 0.6Z" fill="#1aa31a" stroke="#d8e8d8" stroke-width="0.9"/><path d="M6.8 2.2 Q9 3.5 11.8 3.7 V7.6 C11.8 10.4 9.8 12.6 6.8 14 Z" fill="#0b8a0b" opacity="0.6"/><path d="M3.8 7.4 L6 9.6 L10.2 5.2" fill="none" stroke="#ffffff" stroke-width="1.6"/></svg><div class="t sans" style="left:3190px;top:311.59px;width:200px;text-align:right;font-size:12.3px;color:#bbbbbb">50882</div><div class="t sans" style="left:3334px;top:311.59px;width:200px;text-align:right;font-size:12.3px;color:#bbbbbb">115</div><div class="t sans" style="left:3477px;top:311.59px;width:200px;text-align:right;font-size:12.3px;color:#bbbbbb">505</div><div class="t sans" style="left:3621px;top:311.59px;width:200px;text-align:right;font-size:12.3px;color:#bbbbbb">71</div><div class="t sans" style="left:2329px;top:333.59px;width:200px;text-align:right;font-size:12.3px;color:#bbbbbb">3</div><div class="t sans" style="left:2473px;top:333.59px;width:200px;text-align:right;font-size:12.3px;color:#bbbbbb">10:37:41.322</div><div class="t sans" style="left:2684px;top:333.59px;font-size:12.3px;color:#bbbbbb">Thread Group 1-127</div><div class="t sans" style="left:2827px;top:333.59px;font-size:12.3px;color:#bbbbbb">HTTP Request</div><div class="t sans" style="left:2904px;top:333.59px;width:200px;text-align:right;font-size:12.3px;color:#bbbbbb">521</div><svg class="a" style="left:3174.5px;top:331.5px" width="14" height="16" viewBox="0 0 14 16"><path d="M6.8 0.6 Q9.6 2.4 13.2 2.6 V7.6 C13.2 11 10.6 13.6 6.8 15.4 C3 13.6 0.4 11 0.4 7.6 V2.6 Q4 2.4 6.8 0.6Z" fill="#1aa31a" stroke="#d8e8d8" stroke-width="0.9"/><path d="M6.8 2.2 Q9 3.5 11.8 3.7 V7.6 C11.8 10.4 9.8 12.6 6.8 14 Z" fill="#0b8a0b" opacity="0.6"/><path d="M3.8 7.4 L6 9.6 L10.2 5.2" fill="none" stroke="#ffffff" stroke-width="1.6"/></svg><div class="t sans" style="left:3190px;top:333.59px;width:200px;text-align:right;font-size:12.3px;color:#bbbbbb">50881</div><div class="t sans" style="left:3334px;top:333.59px;width:200px;text-align:right;font-size:12.3px;color:#bbbbbb">115</div><div class="t sans" style="left:3477px;top:333.59px;width:200px;text-align:right;font-size:12.3px;color:#bbbbbb">508</div><div class="t sans" style="left:3621px;top:333.59px;width:200px;text-align:right;font-size:12.3px;color:#bbbbbb">78</div><div class="t sans" style="left:2329px;top:355.59px;width:200px;text-align:right;font-size:12.3px;color:#bbbbbb">4</div><div class="t sans" style="left:2473px;top:355.59px;width:200px;text-align:right;font-size:12.3px;color:#bbbbbb">10:37:41.322</div><div class="t sans" style="left:2684px;top:355.59px;font-size:12.3px;color:#bbbbbb">Thread Group 1-42</div><div class="t sans" style="left:2827px;top:355.59px;font-size:12.3px;color:#bbbbbb">HTTP Request</div><div class="t sans" style="left:2904px;top:355.59px;width:200px;text-align:right;font-size:12.3px;color:#bbbbbb">520</div><svg class="a" style="left:3174.5px;top:353.5px" width="14" height="16" viewBox="0 0 14 16"><path d="M6.8 0.6 Q9.6 2.4 13.2 2.6 V7.6 C13.2 11 10.6 13.6 6.8 15.4 C3 13.6 0.4 11 0.4 7.6 V2.6 Q4 2.4 6.8 0.6Z" fill="#1aa31a" stroke="#d8e8d8" stroke-width="0.9"/><path d="M6.8 2.2 Q9 3.5 11.8 3.7 V7.6 C11.8 10.4 9.8 12.6 6.8 14 Z" fill="#0b8a0b" opacity="0.6"/><path d="M3.8 7.4 L6 9.6 L10.2 5.2" fill="none" stroke="#ffffff" stroke-width="1.6"/></svg><div class="t sans" style="left:3190px;top:355.59px;width:200px;text-align:right;font-size:12.3px;color:#bbbbbb">50882</div><div class="t sans" style="left:3334px;top:355.59px;width:200px;text-align:right;font-size:12.3px;color:#bbbbbb">115</div><div class="t sans" style="left:3477px;top:355.59px;width:200px;text-align:right;font-size:12.3px;color:#bbbbbb">518</div><div class="t sans" style="left:3621px;top:355.59px;width:200px;text-align:right;font-size:12.3px;color:#bbbbbb">76</div><div class="t sans" style="left:2329px;top:377.59px;width:200px;text-align:right;font-size:12.3px;color:#bbbbbb">5</div><div class="t sans" style="left:2473px;top:377.59px;width:200px;text-align:right;font-size:12.3px;color:#bbbbbb">10:37:41.353</div><div class="t sans" style="left:2684px;top:377.59px;font-size:12.3px;color:#bbbbbb">Thread Group 1-159</div><div class="t sans" style="left:2827px;top:377.59px;font-size:12.3px;color:#bbbbbb">HTTP Request</div><div class="t sans" style="left:2904px;top:377.59px;width:200px;text-align:right;font-size:12.3px;color:#bbbbbb">491</div><svg class="a" style="left:3174.5px;top:375.5px" width="14" height="16" viewBox="0 0 14 16"><path d="M6.8 0.6 Q9.6 2.4 13.2 2.6 V7.6 C13.2 11 10.6 13.6 6.8 15.4 C3 13.6 0.4 11 0.4 7.6 V2.6 Q4 2.4 6.8 0.6Z" fill="#1aa31a" stroke="#d8e8d8" stroke-width="0.9"/><path d="M6.8 2.2 Q9 3.5 11.8 3.7 V7.6 C11.8 10.4 9.8 12.6 6.8 14 Z" fill="#0b8a0b" opacity="0.6"/><path d="M3.8 7.4 L6 9.6 L10.2 5.2" fill="none" stroke="#ffffff" stroke-width="1.6"/></svg><div class="t sans" style="left:3190px;top:377.59px;width:200px;text-align:right;font-size:12.3px;color:#bbbbbb">50882</div><div class="t sans" style="left:3334px;top:377.59px;width:200px;text-align:right;font-size:12.3px;color:#bbbbbb">115</div><div class="t sans" style="left:3477px;top:377.59px;width:200px;text-align:right;font-size:12.3px;color:#bbbbbb">477</div><div class="t sans" style="left:3621px;top:377.59px;width:200px;text-align:right;font-size:12.3px;color:#bbbbbb">47</div><div class="t sans" style="left:2329px;top:399.59px;width:200px;text-align:right;font-size:12.3px;color:#bbbbbb">6</div><div class="t sans" style="left:2473px;top:399.59px;width:200px;text-align:right;font-size:12.3px;color:#bbbbbb">10:37:41.322</div><div class="t sans" style="left:2684px;top:399.59px;font-size:12.3px;color:#bbbbbb">Thread Group 1-23</div><div class="t sans" style="left:2827px;top:399.59px;font-size:12.3px;color:#bbbbbb">HTTP Request</div><div class="t sans" style="left:2904px;top:399.59px;width:200px;text-align:right;font-size:12.3px;color:#bbbbbb">520</div><svg class="a" style="left:3174.5px;top:397.5px" width="14" height="16" viewBox="0 0 14 16"><path d="M6.8 0.6 Q9.6 2.4 13.2 2.6 V7.6 C13.2 11 10.6 13.6 6.8 15.4 C3 13.6 0.4 11 0.4 7.6 V2.6 Q4 2.4 6.8 0.6Z" fill="#1aa31a" stroke="#d8e8d8" stroke-width="0.9"/><path d="M6.8 2.2 Q9 3.5 11.8 3.7 V7.6 C11.8 10.4 9.8 12.6 6.8 14 Z" fill="#0b8a0b" opacity="0.6"/><path d="M3.8 7.4 L6 9.6 L10.2 5.2" fill="none" stroke="#ffffff" stroke-width="1.6"/></svg><div class="t sans" style="left:3190px;top:399.59px;width:200px;text-align:right;font-size:12.3px;color:#bbbbbb">50881</div><div class="t sans" style="left:3334px;top:399.59px;width:200px;text-align:right;font-size:12.3px;color:#bbbbbb">115</div><div class="t sans" style="left:3477px;top:399.59px;width:200px;text-align:right;font-size:12.3px;color:#bbbbbb">507</div><div class="t sans" style="left:3621px;top:399.59px;width:200px;text-align:right;font-size:12.3px;color:#bbbbbb">76</div><div class="t sans" style="left:2329px;top:421.59px;width:200px;text-align:right;font-size:12.3px;color:#bbbbbb">7</div><div class="t sans" style="left:2473px;top:421.59px;width:200px;text-align:right;font-size:12.3px;color:#bbbbbb">10:37:41.328</div><div class="t sans" style="left:2684px;top:421.59px;font-size:12.3px;color:#bbbbbb">Thread Group 1-113</div><div class="t sans" style="left:2827px;top:421.59px;font-size:12.3px;color:#bbbbbb">HTTP Request</div><div class="t sans" style="left:2904px;top:421.59px;width:200px;text-align:right;font-size:12.3px;color:#bbbbbb">515</div><svg class="a" style="left:3174.5px;top:419.5px" width="14" height="16" viewBox="0 0 14 16"><path d="M6.8 0.6 Q9.6 2.4 13.2 2.6 V7.6 C13.2 11 10.6 13.6 6.8 15.4 C3 13.6 0.4 11 0.4 7.6 V2.6 Q4 2.4 6.8 0.6Z" fill="#1aa31a" stroke="#d8e8d8" stroke-width="0.9"/><path d="M6.8 2.2 Q9 3.5 11.8 3.7 V7.6 C11.8 10.4 9.8 12.6 6.8 14 Z" fill="#0b8a0b" opacity="0.6"/><path d="M3.8 7.4 L6 9.6 L10.2 5.2" fill="none" stroke="#ffffff" stroke-width="1.6"/></svg><div class="t sans" style="left:3190px;top:421.59px;width:200px;text-align:right;font-size:12.3px;color:#bbbbbb">50882</div><div class="t sans" style="left:3334px;top:421.59px;width:200px;text-align:right;font-size:12.3px;color:#bbbbbb">115</div><div class="t sans" style="left:3477px;top:421.59px;width:200px;text-align:right;font-size:12.3px;color:#bbbbbb">502</div><div class="t sans" style="left:3621px;top:421.59px;width:200px;text-align:right;font-size:12.3px;color:#bbbbbb">72</div><div class="t sans" style="left:2329px;top:443.59px;width:200px;text-align:right;font-size:12.3px;color:#bbbbbb">8</div><div class="t sans" style="left:2473px;top:443.59px;width:200px;text-align:right;font-size:12.3px;color:#bbbbbb">10:37:41.320</div><div class="t sans" style="left:2684px;top:443.59px;font-size:12.3px;color:#bbbbbb">Thread Group 1-79</div><div class="t sans" style="left:2827px;top:443.59px;font-size:12.3px;color:#bbbbbb">HTTP Request</div><div class="t sans" style="left:2904px;top:443.59px;width:200px;text-align:right;font-size:12.3px;color:#bbbbbb">523</div><svg class="a" style="left:3174.5px;top:441.5px" width="14" height="16" viewBox="0 0 14 16"><path d="M6.8 0.6 Q9.6 2.4 13.2 2.6 V7.6 C13.2 11 10.6 13.6 6.8 15.4 C3 13.6 0.4 11 0.4 7.6 V2.6 Q4 2.4 6.8 0.6Z" fill="#1aa31a" stroke="#d8e8d8" stroke-width="0.9"/><path d="M6.8 2.2 Q9 3.5 11.8 3.7 V7.6 C11.8 10.4 9.8 12.6 6.8 14 Z" fill="#0b8a0b" opacity="0.6"/><path d="M3.8 7.4 L6 9.6 L10.2 5.2" fill="none" stroke="#ffffff" stroke-width="1.6"/></svg><div class="t sans" style="left:3190px;top:443.59px;width:200px;text-align:right;font-size:12.3px;color:#bbbbbb">50882</div><div class="t sans" style="left:3334px;top:443.59px;width:200px;text-align:right;font-size:12.3px;color:#bbbbbb">115</div><div class="t sans" style="left:3477px;top:443.59px;width:200px;text-align:right;font-size:12.3px;color:#bbbbbb">510</div><div class="t sans" style="left:3621px;top:443.59px;width:200px;text-align:right;font-size:12.3px;color:#bbbbbb">81</div><div class="t sans" style="left:2329px;top:465.59px;width:200px;text-align:right;font-size:12.3px;color:#bbbbbb">9</div><div class="t sans" style="left:2473px;top:465.59px;width:200px;text-align:right;font-size:12.3px;color:#bbbbbb">10:37:41.322</div><div class="t sans" style="left:2684px;top:465.59px;font-size:12.3px;color:#bbbbbb">Thread Group 1-65</div><div class="t sans" style="left:2827px;top:465.59px;font-size:12.3px;color:#bbbbbb">HTTP Request</div><div class="t sans" style="left:2904px;top:465.59px;width:200px;text-align:right;font-size:12.3px;color:#bbbbbb">522</div><svg class="a" style="left:3174.5px;top:463.5px" width="14" height="16" viewBox="0 0 14 16"><path d="M6.8 0.6 Q9.6 2.4 13.2 2.6 V7.6 C13.2 11 10.6 13.6 6.8 15.4 C3 13.6 0.4 11 0.4 7.6 V2.6 Q4 2.4 6.8 0.6Z" fill="#1aa31a" stroke="#d8e8d8" stroke-width="0.9"/><path d="M6.8 2.2 Q9 3.5 11.8 3.7 V7.6 C11.8 10.4 9.8 12.6 6.8 14 Z" fill="#0b8a0b" opacity="0.6"/><path d="M3.8 7.4 L6 9.6 L10.2 5.2" fill="none" stroke="#ffffff" stroke-width="1.6"/></svg><div class="t sans" style="left:3190px;top:465.59px;width:200px;text-align:right;font-size:12.3px;color:#bbbbbb">50881</div><div class="t sans" style="left:3334px;top:465.59px;width:200px;text-align:right;font-size:12.3px;color:#bbbbbb">115</div><div class="t sans" style="left:3477px;top:465.59px;width:200px;text-align:right;font-size:12.3px;color:#bbbbbb">508</div><div class="t sans" style="left:3621px;top:465.59px;width:200px;text-align:right;font-size:12.3px;color:#bbbbbb">78</div><div class="t sans" style="left:2329px;top:487.59px;width:200px;text-align:right;font-size:12.3px;color:#bbbbbb">10</div><div class="t sans" style="left:2473px;top:487.59px;width:200px;text-align:right;font-size:12.3px;color:#bbbbbb">10:37:41.513</div><div class="t sans" style="left:2684px;top:487.59px;font-size:12.3px;color:#bbbbbb">Thread Group 1-318</div><div class="t sans" style="left:2827px;top:487.59px;font-size:12.3px;color:#bbbbbb">HTTP Request</div><div class="t sans" style="left:2904px;top:487.59px;width:200px;text-align:right;font-size:12.3px;color:#bbbbbb">330</div><svg class="a" style="left:3174.5px;top:485.5px" width="14" height="16" viewBox="0 0 14 16"><path d="M6.8 0.6 Q9.6 2.4 13.2 2.6 V7.6 C13.2 11 10.6 13.6 6.8 15.4 C3 13.6 0.4 11 0.4 7.6 V2.6 Q4 2.4 6.8 0.6Z" fill="#1aa31a" stroke="#d8e8d8" stroke-width="0.9"/><path d="M6.8 2.2 Q9 3.5 11.8 3.7 V7.6 C11.8 10.4 9.8 12.6 6.8 14 Z" fill="#0b8a0b" opacity="0.6"/><path d="M3.8 7.4 L6 9.6 L10.2 5.2" fill="none" stroke="#ffffff" stroke-width="1.6"/></svg><div class="t sans" style="left:3190px;top:487.59px;width:200px;text-align:right;font-size:12.3px;color:#bbbbbb">50881</div><div class="t sans" style="left:3334px;top:487.59px;width:200px;text-align:right;font-size:12.3px;color:#bbbbbb">115</div><div class="t sans" style="left:3477px;top:487.59px;width:200px;text-align:right;font-size:12.3px;color:#bbbbbb">317</div><div class="t sans" style="left:3621px;top:487.59px;width:200px;text-align:right;font-size:12.3px;color:#bbbbbb">0</div><div class="t sans" style="left:2329px;top:509.59px;width:200px;text-align:right;font-size:12.3px;color:#bbbbbb">11</div><div class="t sans" style="left:2473px;top:509.59px;width:200px;text-align:right;font-size:12.3px;color:#bbbbbb">10:37:41.328</div><div class="t sans" style="left:2684px;top:509.59px;font-size:12.3px;color:#bbbbbb">Thread Group 1-60</div><div class="t sans" style="left:2827px;top:509.59px;font-size:12.3px;color:#bbbbbb">HTTP Request</div><div class="t sans" style="left:2904px;top:509.59px;width:200px;text-align:right;font-size:12.3px;color:#bbbbbb">515</div><svg class="a" style="left:3174.5px;top:507.5px" width="14" height="16" viewBox="0 0 14 16"><path d="M6.8 0.6 Q9.6 2.4 13.2 2.6 V7.6 C13.2 11 10.6 13.6 6.8 15.4 C3 13.6 0.4 11 0.4 7.6 V2.6 Q4 2.4 6.8 0.6Z" fill="#1aa31a" stroke="#d8e8d8" stroke-width="0.9"/><path d="M6.8 2.2 Q9 3.5 11.8 3.7 V7.6 C11.8 10.4 9.8 12.6 6.8 14 Z" fill="#0b8a0b" opacity="0.6"/><path d="M3.8 7.4 L6 9.6 L10.2 5.2" fill="none" stroke="#ffffff" stroke-width="1.6"/></svg><div class="t sans" style="left:3190px;top:509.59px;width:200px;text-align:right;font-size:12.3px;color:#bbbbbb">50882</div><div class="t sans" style="left:3334px;top:509.59px;width:200px;text-align:right;font-size:12.3px;color:#bbbbbb">115</div><div class="t sans" style="left:3477px;top:509.59px;width:200px;text-align:right;font-size:12.3px;color:#bbbbbb">501</div><div class="t sans" style="left:3621px;top:509.59px;width:200px;text-align:right;font-size:12.3px;color:#bbbbbb">67</div><div class="t sans" style="left:2329px;top:531.59px;width:200px;text-align:right;font-size:12.3px;color:#bbbbbb">12</div><div class="t sans" style="left:2473px;top:531.59px;width:200px;text-align:right;font-size:12.3px;color:#bbbbbb">10:37:41.510</div><div class="t sans" style="left:2684px;top:531.59px;font-size:12.3px;color:#bbbbbb">Thread Group 1-314</div><div class="t sans" style="left:2827px;top:531.59px;font-size:12.3px;color:#bbbbbb">HTTP Request</div><div class="t sans" style="left:2904px;top:531.59px;width:200px;text-align:right;font-size:12.3px;color:#bbbbbb">333</div><svg class="a" style="left:3174.5px;top:529.5px" width="14" height="16" viewBox="0 0 14 16"><path d="M6.8 0.6 Q9.6 2.4 13.2 2.6 V7.6 C13.2 11 10.6 13.6 6.8 15.4 C3 13.6 0.4 11 0.4 7.6 V2.6 Q4 2.4 6.8 0.6Z" fill="#1aa31a" stroke="#d8e8d8" stroke-width="0.9"/><path d="M6.8 2.2 Q9 3.5 11.8 3.7 V7.6 C11.8 10.4 9.8 12.6 6.8 14 Z" fill="#0b8a0b" opacity="0.6"/><path d="M3.8 7.4 L6 9.6 L10.2 5.2" fill="none" stroke="#ffffff" stroke-width="1.6"/></svg><div class="t sans" style="left:3190px;top:531.59px;width:200px;text-align:right;font-size:12.3px;color:#bbbbbb">50881</div><div class="t sans" style="left:3334px;top:531.59px;width:200px;text-align:right;font-size:12.3px;color:#bbbbbb">115</div><div class="t sans" style="left:3477px;top:531.59px;width:200px;text-align:right;font-size:12.3px;color:#bbbbbb">320</div><div class="t sans" style="left:3621px;top:531.59px;width:200px;text-align:right;font-size:12.3px;color:#bbbbbb">0</div><div class="t sans" style="left:2329px;top:553.59px;width:200px;text-align:right;font-size:12.3px;color:#bbbbbb">13</div><div class="t sans" style="left:2473px;top:553.59px;width:200px;text-align:right;font-size:12.3px;color:#bbbbbb">10:37:41.546</div><div class="t sans" style="left:2684px;top:553.59px;font-size:12.3px;color:#bbbbbb">Thread Group 1-351</div><div class="t sans" style="left:2827px;top:553.59px;font-size:12.3px;color:#bbbbbb">HTTP Request</div><div class="t sans" style="left:2904px;top:553.59px;width:200px;text-align:right;font-size:12.3px;color:#bbbbbb">297</div><svg class="a" style="left:3174.5px;top:551.5px" width="14" height="16" viewBox="0 0 14 16"><path d="M6.8 0.6 Q9.6 2.4 13.2 2.6 V7.6 C13.2 11 10.6 13.6 6.8 15.4 C3 13.6 0.4 11 0.4 7.6 V2.6 Q4 2.4 6.8 0.6Z" fill="#1aa31a" stroke="#d8e8d8" stroke-width="0.9"/><path d="M6.8 2.2 Q9 3.5 11.8 3.7 V7.6 C11.8 10.4 9.8 12.6 6.8 14 Z" fill="#0b8a0b" opacity="0.6"/><path d="M3.8 7.4 L6 9.6 L10.2 5.2" fill="none" stroke="#ffffff" stroke-width="1.6"/></svg><div class="t sans" style="left:3190px;top:553.59px;width:200px;text-align:right;font-size:12.3px;color:#bbbbbb">50882</div><div class="t sans" style="left:3334px;top:553.59px;width:200px;text-align:right;font-size:12.3px;color:#bbbbbb">115</div><div class="t sans" style="left:3477px;top:553.59px;width:200px;text-align:right;font-size:12.3px;color:#bbbbbb">293</div><div class="t sans" style="left:3621px;top:553.59px;width:200px;text-align:right;font-size:12.3px;color:#bbbbbb">1</div><div class="t sans" style="left:2329px;top:575.59px;width:200px;text-align:right;font-size:12.3px;color:#bbbbbb">14</div><div class="t sans" style="left:2473px;top:575.59px;width:200px;text-align:right;font-size:12.3px;color:#bbbbbb">10:37:41.335</div><div class="t sans" style="left:2684px;top:575.59px;font-size:12.3px;color:#bbbbbb">Thread Group 1-140</div><div class="t sans" style="left:2827px;top:575.59px;font-size:12.3px;color:#bbbbbb">HTTP Request</div><div class="t sans" style="left:2904px;top:575.59px;width:200px;text-align:right;font-size:12.3px;color:#bbbbbb">509</div><svg class="a" style="left:3174.5px;top:573.5px" width="14" height="16" viewBox="0 0 14 16"><path d="M6.8 0.6 Q9.6 2.4 13.2 2.6 V7.6 C13.2 11 10.6 13.6 6.8 15.4 C3 13.6 0.4 11 0.4 7.6 V2.6 Q4 2.4 6.8 0.6Z" fill="#1aa31a" stroke="#d8e8d8" stroke-width="0.9"/><path d="M6.8 2.2 Q9 3.5 11.8 3.7 V7.6 C11.8 10.4 9.8 12.6 6.8 14 Z" fill="#0b8a0b" opacity="0.6"/><path d="M3.8 7.4 L6 9.6 L10.2 5.2" fill="none" stroke="#ffffff" stroke-width="1.6"/></svg><div class="t sans" style="left:3190px;top:575.59px;width:200px;text-align:right;font-size:12.3px;color:#bbbbbb">50882</div><div class="t sans" style="left:3334px;top:575.59px;width:200px;text-align:right;font-size:12.3px;color:#bbbbbb">115</div><div class="t sans" style="left:3477px;top:575.59px;width:200px;text-align:right;font-size:12.3px;color:#bbbbbb">506</div><div class="t sans" style="left:3621px;top:575.59px;width:200px;text-align:right;font-size:12.3px;color:#bbbbbb">67</div><div class="t sans" style="left:2329px;top:597.59px;width:200px;text-align:right;font-size:12.3px;color:#bbbbbb">15</div><div class="t sans" style="left:2473px;top:597.59px;width:200px;text-align:right;font-size:12.3px;color:#bbbbbb">10:37:41.586</div><div class="t sans" style="left:2684px;top:597.59px;font-size:12.3px;color:#bbbbbb">Thread Group 1-391</div><div class="t sans" style="left:2827px;top:597.59px;font-size:12.3px;color:#bbbbbb">HTTP Request</div><div class="t sans" style="left:2904px;top:597.59px;width:200px;text-align:right;font-size:12.3px;color:#bbbbbb">257</div><svg class="a" style="left:3174.5px;top:595.5px" width="14" height="16" viewBox="0 0 14 16"><path d="M6.8 0.6 Q9.6 2.4 13.2 2.6 V7.6 C13.2 11 10.6 13.6 6.8 15.4 C3 13.6 0.4 11 0.4 7.6 V2.6 Q4 2.4 6.8 0.6Z" fill="#1aa31a" stroke="#d8e8d8" stroke-width="0.9"/><path d="M6.8 2.2 Q9 3.5 11.8 3.7 V7.6 C11.8 10.4 9.8 12.6 6.8 14 Z" fill="#0b8a0b" opacity="0.6"/><path d="M3.8 7.4 L6 9.6 L10.2 5.2" fill="none" stroke="#ffffff" stroke-width="1.6"/></svg><div class="t sans" style="left:3190px;top:597.59px;width:200px;text-align:right;font-size:12.3px;color:#bbbbbb">50882</div><div class="t sans" style="left:3334px;top:597.59px;width:200px;text-align:right;font-size:12.3px;color:#bbbbbb">115</div><div class="t sans" style="left:3477px;top:597.59px;width:200px;text-align:right;font-size:12.3px;color:#bbbbbb">244</div><div class="t sans" style="left:3621px;top:597.59px;width:200px;text-align:right;font-size:12.3px;color:#bbbbbb">2</div><div class="t sans" style="left:2329px;top:619.59px;width:200px;text-align:right;font-size:12.3px;color:#bbbbbb">16</div><div class="t sans" style="left:2473px;top:619.59px;width:200px;text-align:right;font-size:12.3px;color:#bbbbbb">10:37:41.383</div><div class="t sans" style="left:2684px;top:619.59px;font-size:12.3px;color:#bbbbbb">Thread Group 1-188</div><div class="t sans" style="left:2827px;top:619.59px;font-size:12.3px;color:#bbbbbb">HTTP Request</div><div class="t sans" style="left:2904px;top:619.59px;width:200px;text-align:right;font-size:12.3px;color:#bbbbbb">461</div><svg class="a" style="left:3174.5px;top:617.5px" width="14" height="16" viewBox="0 0 14 16"><path d="M6.8 0.6 Q9.6 2.4 13.2 2.6 V7.6 C13.2 11 10.6 13.6 6.8 15.4 C3 13.6 0.4 11 0.4 7.6 V2.6 Q4 2.4 6.8 0.6Z" fill="#1aa31a" stroke="#d8e8d8" stroke-width="0.9"/><path d="M6.8 2.2 Q9 3.5 11.8 3.7 V7.6 C11.8 10.4 9.8 12.6 6.8 14 Z" fill="#0b8a0b" opacity="0.6"/><path d="M3.8 7.4 L6 9.6 L10.2 5.2" fill="none" stroke="#ffffff" stroke-width="1.6"/></svg><div class="t sans" style="left:3190px;top:619.59px;width:200px;text-align:right;font-size:12.3px;color:#bbbbbb">50882</div><div class="t sans" style="left:3334px;top:619.59px;width:200px;text-align:right;font-size:12.3px;color:#bbbbbb">115</div><div class="t sans" style="left:3477px;top:619.59px;width:200px;text-align:right;font-size:12.3px;color:#bbbbbb">448</div><div class="t sans" style="left:3621px;top:619.59px;width:200px;text-align:right;font-size:12.3px;color:#bbbbbb">16</div><div class="t sans" style="left:2329px;top:641.59px;width:200px;text-align:right;font-size:12.3px;color:#bbbbbb">17</div><div class="t sans" style="left:2473px;top:641.59px;width:200px;text-align:right;font-size:12.3px;color:#bbbbbb">10:37:41.322</div><div class="t sans" style="left:2684px;top:641.59px;font-size:12.3px;color:#bbbbbb">Thread Group 1-27</div><div class="t sans" style="left:2827px;top:641.59px;font-size:12.3px;color:#bbbbbb">HTTP Request</div><div class="t sans" style="left:2904px;top:641.59px;width:200px;text-align:right;font-size:12.3px;color:#bbbbbb">521</div><svg class="a" style="left:3174.5px;top:639.5px" width="14" height="16" viewBox="0 0 14 16"><path d="M6.8 0.6 Q9.6 2.4 13.2 2.6 V7.6 C13.2 11 10.6 13.6 6.8 15.4 C3 13.6 0.4 11 0.4 7.6 V2.6 Q4 2.4 6.8 0.6Z" fill="#1aa31a" stroke="#d8e8d8" stroke-width="0.9"/><path d="M6.8 2.2 Q9 3.5 11.8 3.7 V7.6 C11.8 10.4 9.8 12.6 6.8 14 Z" fill="#0b8a0b" opacity="0.6"/><path d="M3.8 7.4 L6 9.6 L10.2 5.2" fill="none" stroke="#ffffff" stroke-width="1.6"/></svg><div class="t sans" style="left:3190px;top:641.59px;width:200px;text-align:right;font-size:12.3px;color:#bbbbbb">50881</div><div class="t sans" style="left:3334px;top:641.59px;width:200px;text-align:right;font-size:12.3px;color:#bbbbbb">115</div><div class="t sans" style="left:3477px;top:641.59px;width:200px;text-align:right;font-size:12.3px;color:#bbbbbb">507</div><div class="t sans" style="left:3621px;top:641.59px;width:200px;text-align:right;font-size:12.3px;color:#bbbbbb">76</div><div class="t sans" style="left:2329px;top:663.59px;width:200px;text-align:right;font-size:12.3px;color:#bbbbbb">18</div><div class="t sans" style="left:2473px;top:663.59px;width:200px;text-align:right;font-size:12.3px;color:#bbbbbb">10:37:41.327</div><div class="t sans" style="left:2684px;top:663.59px;font-size:12.3px;color:#bbbbbb">Thread Group 1-78</div><div class="t sans" style="left:2827px;top:663.59px;font-size:12.3px;color:#bbbbbb">HTTP Request</div><div class="t sans" style="left:2904px;top:663.59px;width:200px;text-align:right;font-size:12.3px;color:#bbbbbb">517</div><svg class="a" style="left:3174.5px;top:661.5px" width="14" height="16" viewBox="0 0 14 16"><path d="M6.8 0.6 Q9.6 2.4 13.2 2.6 V7.6 C13.2 11 10.6 13.6 6.8 15.4 C3 13.6 0.4 11 0.4 7.6 V2.6 Q4 2.4 6.8 0.6Z" fill="#1aa31a" stroke="#d8e8d8" stroke-width="0.9"/><path d="M6.8 2.2 Q9 3.5 11.8 3.7 V7.6 C11.8 10.4 9.8 12.6 6.8 14 Z" fill="#0b8a0b" opacity="0.6"/><path d="M3.8 7.4 L6 9.6 L10.2 5.2" fill="none" stroke="#ffffff" stroke-width="1.6"/></svg><div class="t sans" style="left:3190px;top:663.59px;width:200px;text-align:right;font-size:12.3px;color:#bbbbbb">50882</div><div class="t sans" style="left:3334px;top:663.59px;width:200px;text-align:right;font-size:12.3px;color:#bbbbbb">115</div><div class="t sans" style="left:3477px;top:663.59px;width:200px;text-align:right;font-size:12.3px;color:#bbbbbb">514</div><div class="t sans" style="left:3621px;top:663.59px;width:200px;text-align:right;font-size:12.3px;color:#bbbbbb">72</div><div class="t sans" style="left:2329px;top:685.59px;width:200px;text-align:right;font-size:12.3px;color:#bbbbbb">19</div><div class="t sans" style="left:2473px;top:685.59px;width:200px;text-align:right;font-size:12.3px;color:#bbbbbb">10:37:41.336</div><div class="t sans" style="left:2684px;top:685.59px;font-size:12.3px;color:#bbbbbb">Thread Group 1-141</div><div class="t sans" style="left:2827px;top:685.59px;font-size:12.3px;color:#bbbbbb">HTTP Request</div><div class="t sans" style="left:2904px;top:685.59px;width:200px;text-align:right;font-size:12.3px;color:#bbbbbb">508</div><svg class="a" style="left:3174.5px;top:683.5px" width="14" height="16" viewBox="0 0 14 16"><path d="M6.8 0.6 Q9.6 2.4 13.2 2.6 V7.6 C13.2 11 10.6 13.6 6.8 15.4 C3 13.6 0.4 11 0.4 7.6 V2.6 Q4 2.4 6.8 0.6Z" fill="#1aa31a" stroke="#d8e8d8" stroke-width="0.9"/><path d="M6.8 2.2 Q9 3.5 11.8 3.7 V7.6 C11.8 10.4 9.8 12.6 6.8 14 Z" fill="#0b8a0b" opacity="0.6"/><path d="M3.8 7.4 L6 9.6 L10.2 5.2" fill="none" stroke="#ffffff" stroke-width="1.6"/></svg><div class="t sans" style="left:3190px;top:685.59px;width:200px;text-align:right;font-size:12.3px;color:#bbbbbb">50882</div><div class="t sans" style="left:3334px;top:685.59px;width:200px;text-align:right;font-size:12.3px;color:#bbbbbb">115</div><div class="t sans" style="left:3477px;top:685.59px;width:200px;text-align:right;font-size:12.3px;color:#bbbbbb">495</div><div class="t sans" style="left:3621px;top:685.59px;width:200px;text-align:right;font-size:12.3px;color:#bbbbbb">65</div><div class="t sans" style="left:2329px;top:707.59px;width:200px;text-align:right;font-size:12.3px;color:#bbbbbb">20</div><div class="t sans" style="left:2473px;top:707.59px;width:200px;text-align:right;font-size:12.3px;color:#bbbbbb">10:37:41.387</div><div class="t sans" style="left:2684px;top:707.59px;font-size:12.3px;color:#bbbbbb">Thread Group 1-192</div><div class="t sans" style="left:2827px;top:707.59px;font-size:12.3px;color:#bbbbbb">HTTP Request</div><div class="t sans" style="left:2904px;top:707.59px;width:200px;text-align:right;font-size:12.3px;color:#bbbbbb">457</div><svg class="a" style="left:3174.5px;top:705.5px" width="14" height="16" viewBox="0 0 14 16"><path d="M6.8 0.6 Q9.6 2.4 13.2 2.6 V7.6 C13.2 11 10.6 13.6 6.8 15.4 C3 13.6 0.4 11 0.4 7.6 V2.6 Q4 2.4 6.8 0.6Z" fill="#1aa31a" stroke="#d8e8d8" stroke-width="0.9"/><path d="M6.8 2.2 Q9 3.5 11.8 3.7 V7.6 C11.8 10.4 9.8 12.6 6.8 14 Z" fill="#0b8a0b" opacity="0.6"/><path d="M3.8 7.4 L6 9.6 L10.2 5.2" fill="none" stroke="#ffffff" stroke-width="1.6"/></svg><div class="t sans" style="left:3190px;top:707.59px;width:200px;text-align:right;font-size:12.3px;color:#bbbbbb">50881</div><div class="t sans" style="left:3334px;top:707.59px;width:200px;text-align:right;font-size:12.3px;color:#bbbbbb">115</div><div class="t sans" style="left:3477px;top:707.59px;width:200px;text-align:right;font-size:12.3px;color:#bbbbbb">444</div><div class="t sans" style="left:3621px;top:707.59px;width:200px;text-align:right;font-size:12.3px;color:#bbbbbb">13</div><div class="t sans" style="left:2329px;top:729.59px;width:200px;text-align:right;font-size:12.3px;color:#bbbbbb">21</div><div class="t sans" style="left:2473px;top:729.59px;width:200px;text-align:right;font-size:12.3px;color:#bbbbbb">10:37:41.332</div><div class="t sans" style="left:2684px;top:729.59px;font-size:12.3px;color:#bbbbbb">Thread Group 1-137</div><div class="t sans" style="left:2827px;top:729.59px;font-size:12.3px;color:#bbbbbb">HTTP Request</div><div class="t sans" style="left:2904px;top:729.59px;width:200px;text-align:right;font-size:12.3px;color:#bbbbbb">513</div><svg class="a" style="left:3174.5px;top:727.5px" width="14" height="16" viewBox="0 0 14 16"><path d="M6.8 0.6 Q9.6 2.4 13.2 2.6 V7.6 C13.2 11 10.6 13.6 6.8 15.4 C3 13.6 0.4 11 0.4 7.6 V2.6 Q4 2.4 6.8 0.6Z" fill="#1aa31a" stroke="#d8e8d8" stroke-width="0.9"/><path d="M6.8 2.2 Q9 3.5 11.8 3.7 V7.6 C11.8 10.4 9.8 12.6 6.8 14 Z" fill="#0b8a0b" opacity="0.6"/><path d="M3.8 7.4 L6 9.6 L10.2 5.2" fill="none" stroke="#ffffff" stroke-width="1.6"/></svg><div class="t sans" style="left:3190px;top:729.59px;width:200px;text-align:right;font-size:12.3px;color:#bbbbbb">50882</div><div class="t sans" style="left:3334px;top:729.59px;width:200px;text-align:right;font-size:12.3px;color:#bbbbbb">115</div><div class="t sans" style="left:3477px;top:729.59px;width:200px;text-align:right;font-size:12.3px;color:#bbbbbb">509</div><div class="t sans" style="left:3621px;top:729.59px;width:200px;text-align:right;font-size:12.3px;color:#bbbbbb">70</div><div class="t sans" style="left:2329px;top:751.59px;width:200px;text-align:right;font-size:12.3px;color:#bbbbbb">22</div><div class="t sans" style="left:2473px;top:751.59px;width:200px;text-align:right;font-size:12.3px;color:#bbbbbb">10:37:41.591</div><div class="t sans" style="left:2684px;top:751.59px;font-size:12.3px;color:#bbbbbb">Thread Group 1-396</div><div class="t sans" style="left:2827px;top:751.59px;font-size:12.3px;color:#bbbbbb">HTTP Request</div><div class="t sans" style="left:2904px;top:751.59px;width:200px;text-align:right;font-size:12.3px;color:#bbbbbb">254</div><svg class="a" style="left:3174.5px;top:749.5px" width="14" height="16" viewBox="0 0 14 16"><path d="M6.8 0.6 Q9.6 2.4 13.2 2.6 V7.6 C13.2 11 10.6 13.6 6.8 15.4 C3 13.6 0.4 11 0.4 7.6 V2.6 Q4 2.4 6.8 0.6Z" fill="#1aa31a" stroke="#d8e8d8" stroke-width="0.9"/><path d="M6.8 2.2 Q9 3.5 11.8 3.7 V7.6 C11.8 10.4 9.8 12.6 6.8 14 Z" fill="#0b8a0b" opacity="0.6"/><path d="M3.8 7.4 L6 9.6 L10.2 5.2" fill="none" stroke="#ffffff" stroke-width="1.6"/></svg><div class="t sans" style="left:3190px;top:751.59px;width:200px;text-align:right;font-size:12.3px;color:#bbbbbb">50881</div><div class="t sans" style="left:3334px;top:751.59px;width:200px;text-align:right;font-size:12.3px;color:#bbbbbb">115</div><div class="t sans" style="left:3477px;top:751.59px;width:200px;text-align:right;font-size:12.3px;color:#bbbbbb">240</div><div class="t sans" style="left:3621px;top:751.59px;width:200px;text-align:right;font-size:12.3px;color:#bbbbbb">1</div><div class="t sans" style="left:2329px;top:773.59px;width:200px;text-align:right;font-size:12.3px;color:#bbbbbb">23</div><div class="t sans" style="left:2473px;top:773.59px;width:200px;text-align:right;font-size:12.3px;color:#bbbbbb">10:37:41.511</div><div class="t sans" style="left:2684px;top:773.59px;font-size:12.3px;color:#bbbbbb">Thread Group 1-316</div><div class="t sans" style="left:2827px;top:773.59px;font-size:12.3px;color:#bbbbbb">HTTP Request</div><div class="t sans" style="left:2904px;top:773.59px;width:200px;text-align:right;font-size:12.3px;color:#bbbbbb">334</div><svg class="a" style="left:3174.5px;top:771.5px" width="14" height="16" viewBox="0 0 14 16"><path d="M6.8 0.6 Q9.6 2.4 13.2 2.6 V7.6 C13.2 11 10.6 13.6 6.8 15.4 C3 13.6 0.4 11 0.4 7.6 V2.6 Q4 2.4 6.8 0.6Z" fill="#1aa31a" stroke="#d8e8d8" stroke-width="0.9"/><path d="M6.8 2.2 Q9 3.5 11.8 3.7 V7.6 C11.8 10.4 9.8 12.6 6.8 14 Z" fill="#0b8a0b" opacity="0.6"/><path d="M3.8 7.4 L6 9.6 L10.2 5.2" fill="none" stroke="#ffffff" stroke-width="1.6"/></svg><div class="t sans" style="left:3190px;top:773.59px;width:200px;text-align:right;font-size:12.3px;color:#bbbbbb">50881</div><div class="t sans" style="left:3334px;top:773.59px;width:200px;text-align:right;font-size:12.3px;color:#bbbbbb">115</div><div class="t sans" style="left:3477px;top:773.59px;width:200px;text-align:right;font-size:12.3px;color:#bbbbbb">320</div><div class="t sans" style="left:3621px;top:773.59px;width:200px;text-align:right;font-size:12.3px;color:#bbbbbb">1</div><div class="t sans" style="left:2329px;top:795.59px;width:200px;text-align:right;font-size:12.3px;color:#bbbbbb">24</div><div class="t sans" style="left:2473px;top:795.59px;width:200px;text-align:right;font-size:12.3px;color:#bbbbbb">10:37:41.414</div><div class="t sans" style="left:2684px;top:795.59px;font-size:12.3px;color:#bbbbbb">Thread Group 1-219</div><div class="t sans" style="left:2827px;top:795.59px;font-size:12.3px;color:#bbbbbb">HTTP Request</div><div class="t sans" style="left:2904px;top:795.59px;width:200px;text-align:right;font-size:12.3px;color:#bbbbbb">430</div><svg class="a" style="left:3174.5px;top:793.5px" width="14" height="16" viewBox="0 0 14 16"><path d="M6.8 0.6 Q9.6 2.4 13.2 2.6 V7.6 C13.2 11 10.6 13.6 6.8 15.4 C3 13.6 0.4 11 0.4 7.6 V2.6 Q4 2.4 6.8 0.6Z" fill="#1aa31a" stroke="#d8e8d8" stroke-width="0.9"/><path d="M6.8 2.2 Q9 3.5 11.8 3.7 V7.6 C11.8 10.4 9.8 12.6 6.8 14 Z" fill="#0b8a0b" opacity="0.6"/><path d="M3.8 7.4 L6 9.6 L10.2 5.2" fill="none" stroke="#ffffff" stroke-width="1.6"/></svg><div class="t sans" style="left:3190px;top:795.59px;width:200px;text-align:right;font-size:12.3px;color:#bbbbbb">50881</div><div class="t sans" style="left:3334px;top:795.59px;width:200px;text-align:right;font-size:12.3px;color:#bbbbbb">115</div><div class="t sans" style="left:3477px;top:795.59px;width:200px;text-align:right;font-size:12.3px;color:#bbbbbb">416</div><div class="t sans" style="left:3621px;top:795.59px;width:200px;text-align:right;font-size:12.3px;color:#bbbbbb">0</div><div class="t sans" style="left:2329px;top:817.59px;width:200px;text-align:right;font-size:12.3px;color:#bbbbbb">25</div><div class="t sans" style="left:2473px;top:817.59px;width:200px;text-align:right;font-size:12.3px;color:#bbbbbb">10:37:41.529</div><div class="t sans" style="left:2684px;top:817.59px;font-size:12.3px;color:#bbbbbb">Thread Group 1-334</div><div class="t sans" style="left:2827px;top:817.59px;font-size:12.3px;color:#bbbbbb">HTTP Request</div><div class="t sans" style="left:2904px;top:817.59px;width:200px;text-align:right;font-size:12.3px;color:#bbbbbb">316</div><svg class="a" style="left:3174.5px;top:815.5px" width="14" height="16" viewBox="0 0 14 16"><path d="M6.8 0.6 Q9.6 2.4 13.2 2.6 V7.6 C13.2 11 10.6 13.6 6.8 15.4 C3 13.6 0.4 11 0.4 7.6 V2.6 Q4 2.4 6.8 0.6Z" fill="#1aa31a" stroke="#d8e8d8" stroke-width="0.9"/><path d="M6.8 2.2 Q9 3.5 11.8 3.7 V7.6 C11.8 10.4 9.8 12.6 6.8 14 Z" fill="#0b8a0b" opacity="0.6"/><path d="M3.8 7.4 L6 9.6 L10.2 5.2" fill="none" stroke="#ffffff" stroke-width="1.6"/></svg><div class="t sans" style="left:3190px;top:817.59px;width:200px;text-align:right;font-size:12.3px;color:#bbbbbb">50882</div><div class="t sans" style="left:3334px;top:817.59px;width:200px;text-align:right;font-size:12.3px;color:#bbbbbb">115</div><div class="t sans" style="left:3477px;top:817.59px;width:200px;text-align:right;font-size:12.3px;color:#bbbbbb">312</div><div class="t sans" style="left:3621px;top:817.59px;width:200px;text-align:right;font-size:12.3px;color:#bbbbbb">1</div><div class="t sans" style="left:2329px;top:839.59px;width:200px;text-align:right;font-size:12.3px;color:#bbbbbb">26</div><div class="t sans" style="left:2473px;top:839.59px;width:200px;text-align:right;font-size:12.3px;color:#bbbbbb">10:37:41.321</div><div class="t sans" style="left:2684px;top:839.59px;font-size:12.3px;color:#bbbbbb">Thread Group 1-89</div><div class="t sans" style="left:2827px;top:839.59px;font-size:12.3px;color:#bbbbbb">HTTP Request</div><div class="t sans" style="left:2904px;top:839.59px;width:200px;text-align:right;font-size:12.3px;color:#bbbbbb">524</div><svg class="a" style="left:3174.5px;top:837.5px" width="14" height="16" viewBox="0 0 14 16"><path d="M6.8 0.6 Q9.6 2.4 13.2 2.6 V7.6 C13.2 11 10.6 13.6 6.8 15.4 C3 13.6 0.4 11 0.4 7.6 V2.6 Q4 2.4 6.8 0.6Z" fill="#1aa31a" stroke="#d8e8d8" stroke-width="0.9"/><path d="M6.8 2.2 Q9 3.5 11.8 3.7 V7.6 C11.8 10.4 9.8 12.6 6.8 14 Z" fill="#0b8a0b" opacity="0.6"/><path d="M3.8 7.4 L6 9.6 L10.2 5.2" fill="none" stroke="#ffffff" stroke-width="1.6"/></svg><div class="t sans" style="left:3190px;top:839.59px;width:200px;text-align:right;font-size:12.3px;color:#bbbbbb">50882</div><div class="t sans" style="left:3334px;top:839.59px;width:200px;text-align:right;font-size:12.3px;color:#bbbbbb">115</div><div class="t sans" style="left:3477px;top:839.59px;width:200px;text-align:right;font-size:12.3px;color:#bbbbbb">510</div><div class="t sans" style="left:3621px;top:839.59px;width:200px;text-align:right;font-size:12.3px;color:#bbbbbb">77</div><div class="t sans" style="left:2329px;top:861.59px;width:200px;text-align:right;font-size:12.3px;color:#bbbbbb">27</div><div class="t sans" style="left:2473px;top:861.59px;width:200px;text-align:right;font-size:12.3px;color:#bbbbbb">10:37:41.423</div><div class="t sans" style="left:2684px;top:861.59px;font-size:12.3px;color:#bbbbbb">Thread Group 1-228</div><div class="t sans" style="left:2827px;top:861.59px;font-size:12.3px;color:#bbbbbb">HTTP Request</div><div class="t sans" style="left:2904px;top:861.59px;width:200px;text-align:right;font-size:12.3px;color:#bbbbbb">422</div><svg class="a" style="left:3174.5px;top:859.5px" width="14" height="16" viewBox="0 0 14 16"><path d="M6.8 0.6 Q9.6 2.4 13.2 2.6 V7.6 C13.2 11 10.6 13.6 6.8 15.4 C3 13.6 0.4 11 0.4 7.6 V2.6 Q4 2.4 6.8 0.6Z" fill="#1aa31a" stroke="#d8e8d8" stroke-width="0.9"/><path d="M6.8 2.2 Q9 3.5 11.8 3.7 V7.6 C11.8 10.4 9.8 12.6 6.8 14 Z" fill="#0b8a0b" opacity="0.6"/><path d="M3.8 7.4 L6 9.6 L10.2 5.2" fill="none" stroke="#ffffff" stroke-width="1.6"/></svg><div class="t sans" style="left:3190px;top:861.59px;width:200px;text-align:right;font-size:12.3px;color:#bbbbbb">50881</div><div class="t sans" style="left:3334px;top:861.59px;width:200px;text-align:right;font-size:12.3px;color:#bbbbbb">115</div><div class="t sans" style="left:3477px;top:861.59px;width:200px;text-align:right;font-size:12.3px;color:#bbbbbb">408</div><div class="t sans" style="left:3621px;top:861.59px;width:200px;text-align:right;font-size:12.3px;color:#bbbbbb">0</div><div class="t sans" style="left:2329px;top:883.59px;width:200px;text-align:right;font-size:12.3px;color:#bbbbbb">28</div><div class="t sans" style="left:2473px;top:883.59px;width:200px;text-align:right;font-size:12.3px;color:#bbbbbb">10:37:41.395</div><div class="t sans" style="left:2684px;top:883.59px;font-size:12.3px;color:#bbbbbb">Thread Group 1-200</div><div class="t sans" style="left:2827px;top:883.59px;font-size:12.3px;color:#bbbbbb">HTTP Request</div><div class="t sans" style="left:2904px;top:883.59px;width:200px;text-align:right;font-size:12.3px;color:#bbbbbb">451</div><svg class="a" style="left:3174.5px;top:881.5px" width="14" height="16" viewBox="0 0 14 16"><path d="M6.8 0.6 Q9.6 2.4 13.2 2.6 V7.6 C13.2 11 10.6 13.6 6.8 15.4 C3 13.6 0.4 11 0.4 7.6 V2.6 Q4 2.4 6.8 0.6Z" fill="#1aa31a" stroke="#d8e8d8" stroke-width="0.9"/><path d="M6.8 2.2 Q9 3.5 11.8 3.7 V7.6 C11.8 10.4 9.8 12.6 6.8 14 Z" fill="#0b8a0b" opacity="0.6"/><path d="M3.8 7.4 L6 9.6 L10.2 5.2" fill="none" stroke="#ffffff" stroke-width="1.6"/></svg><div class="t sans" style="left:3190px;top:883.59px;width:200px;text-align:right;font-size:12.3px;color:#bbbbbb">50882</div><div class="t sans" style="left:3334px;top:883.59px;width:200px;text-align:right;font-size:12.3px;color:#bbbbbb">115</div><div class="t sans" style="left:3477px;top:883.59px;width:200px;text-align:right;font-size:12.3px;color:#bbbbbb">447</div><div class="t sans" style="left:3621px;top:883.59px;width:200px;text-align:right;font-size:12.3px;color:#bbbbbb">4</div><div class="t sans" style="left:2329px;top:905.59px;width:200px;text-align:right;font-size:12.3px;color:#bbbbbb">29</div><div class="t sans" style="left:2473px;top:905.59px;width:200px;text-align:right;font-size:12.3px;color:#bbbbbb">10:37:41.324</div><div class="t sans" style="left:2684px;top:905.59px;font-size:12.3px;color:#bbbbbb">Thread Group 1-9</div><div class="t sans" style="left:2827px;top:905.59px;font-size:12.3px;color:#bbbbbb">HTTP Request</div><div class="t sans" style="left:2904px;top:905.59px;width:200px;text-align:right;font-size:12.3px;color:#bbbbbb">521</div><svg class="a" style="left:3174.5px;top:903.5px" width="14" height="16" viewBox="0 0 14 16"><path d="M6.8 0.6 Q9.6 2.4 13.2 2.6 V7.6 C13.2 11 10.6 13.6 6.8 15.4 C3 13.6 0.4 11 0.4 7.6 V2.6 Q4 2.4 6.8 0.6Z" fill="#1aa31a" stroke="#d8e8d8" stroke-width="0.9"/><path d="M6.8 2.2 Q9 3.5 11.8 3.7 V7.6 C11.8 10.4 9.8 12.6 6.8 14 Z" fill="#0b8a0b" opacity="0.6"/><path d="M3.8 7.4 L6 9.6 L10.2 5.2" fill="none" stroke="#ffffff" stroke-width="1.6"/></svg><div class="t sans" style="left:3190px;top:905.59px;width:200px;text-align:right;font-size:12.3px;color:#bbbbbb">50882</div><div class="t sans" style="left:3334px;top:905.59px;width:200px;text-align:right;font-size:12.3px;color:#bbbbbb">115</div><div class="t sans" style="left:3477px;top:905.59px;width:200px;text-align:right;font-size:12.3px;color:#bbbbbb">517</div><div class="t sans" style="left:3621px;top:905.59px;width:200px;text-align:right;font-size:12.3px;color:#bbbbbb">77</div><div class="t sans" style="left:2329px;top:927.59px;width:200px;text-align:right;font-size:12.3px;color:#bbbbbb">30</div><div class="t sans" style="left:2473px;top:927.59px;width:200px;text-align:right;font-size:12.3px;color:#bbbbbb">10:37:41.373</div><div class="t sans" style="left:2684px;top:927.59px;font-size:12.3px;color:#bbbbbb">Thread Group 1-177</div><div class="t sans" style="left:2827px;top:927.59px;font-size:12.3px;color:#bbbbbb">HTTP Request</div><div class="t sans" style="left:2904px;top:927.59px;width:200px;text-align:right;font-size:12.3px;color:#bbbbbb">473</div><svg class="a" style="left:3174.5px;top:925.5px" width="14" height="16" viewBox="0 0 14 16"><path d="M6.8 0.6 Q9.6 2.4 13.2 2.6 V7.6 C13.2 11 10.6 13.6 6.8 15.4 C3 13.6 0.4 11 0.4 7.6 V2.6 Q4 2.4 6.8 0.6Z" fill="#1aa31a" stroke="#d8e8d8" stroke-width="0.9"/><path d="M6.8 2.2 Q9 3.5 11.8 3.7 V7.6 C11.8 10.4 9.8 12.6 6.8 14 Z" fill="#0b8a0b" opacity="0.6"/><path d="M3.8 7.4 L6 9.6 L10.2 5.2" fill="none" stroke="#ffffff" stroke-width="1.6"/></svg><div class="t sans" style="left:3190px;top:927.59px;width:200px;text-align:right;font-size:12.3px;color:#bbbbbb">50882</div><div class="t sans" style="left:3334px;top:927.59px;width:200px;text-align:right;font-size:12.3px;color:#bbbbbb">115</div><div class="t sans" style="left:3477px;top:927.59px;width:200px;text-align:right;font-size:12.3px;color:#bbbbbb">466</div><div class="t sans" style="left:3621px;top:927.59px;width:200px;text-align:right;font-size:12.3px;color:#bbbbbb">28</div><div class="t sans" style="left:2329px;top:949.59px;width:200px;text-align:right;font-size:12.3px;color:#bbbbbb">31</div><div class="t sans" style="left:2473px;top:949.59px;width:200px;text-align:right;font-size:12.3px;color:#bbbbbb">10:37:41.322</div><div class="t sans" style="left:2684px;top:949.59px;font-size:12.3px;color:#bbbbbb">Thread Group 1-46</div><div class="t sans" style="left:2827px;top:949.59px;font-size:12.3px;color:#bbbbbb">HTTP Request</div><div class="t sans" style="left:2904px;top:949.59px;width:200px;text-align:right;font-size:12.3px;color:#bbbbbb">521</div><svg class="a" style="left:3174.5px;top:947.5px" width="14" height="16" viewBox="0 0 14 16"><path d="M6.8 0.6 Q9.6 2.4 13.2 2.6 V7.6 C13.2 11 10.6 13.6 6.8 15.4 C3 13.6 0.4 11 0.4 7.6 V2.6 Q4 2.4 6.8 0.6Z" fill="#1aa31a" stroke="#d8e8d8" stroke-width="0.9"/><path d="M6.8 2.2 Q9 3.5 11.8 3.7 V7.6 C11.8 10.4 9.8 12.6 6.8 14 Z" fill="#0b8a0b" opacity="0.6"/><path d="M3.8 7.4 L6 9.6 L10.2 5.2" fill="none" stroke="#ffffff" stroke-width="1.6"/></svg><div class="t sans" style="left:3190px;top:949.59px;width:200px;text-align:right;font-size:12.3px;color:#bbbbbb">50881</div><div class="t sans" style="left:3334px;top:949.59px;width:200px;text-align:right;font-size:12.3px;color:#bbbbbb">115</div><div class="t sans" style="left:3477px;top:949.59px;width:200px;text-align:right;font-size:12.3px;color:#bbbbbb">507</div><div class="t sans" style="left:3621px;top:949.59px;width:200px;text-align:right;font-size:12.3px;color:#bbbbbb">74</div><div class="t sans" style="left:2329px;top:971.59px;width:200px;text-align:right;font-size:12.3px;color:#bbbbbb">32</div><div class="t sans" style="left:2473px;top:971.59px;width:200px;text-align:right;font-size:12.3px;color:#bbbbbb">10:37:41.325</div><div class="t sans" style="left:2684px;top:971.59px;font-size:12.3px;color:#bbbbbb">Thread Group 1-98</div><div class="t sans" style="left:2827px;top:971.59px;font-size:12.3px;color:#bbbbbb">HTTP Request</div><div class="t sans" style="left:2904px;top:971.59px;width:200px;text-align:right;font-size:12.3px;color:#bbbbbb">521</div><svg class="a" style="left:3174.5px;top:969.5px" width="14" height="16" viewBox="0 0 14 16"><path d="M6.8 0.6 Q9.6 2.4 13.2 2.6 V7.6 C13.2 11 10.6 13.6 6.8 15.4 C3 13.6 0.4 11 0.4 7.6 V2.6 Q4 2.4 6.8 0.6Z" fill="#1aa31a" stroke="#d8e8d8" stroke-width="0.9"/><path d="M6.8 2.2 Q9 3.5 11.8 3.7 V7.6 C11.8 10.4 9.8 12.6 6.8 14 Z" fill="#0b8a0b" opacity="0.6"/><path d="M3.8 7.4 L6 9.6 L10.2 5.2" fill="none" stroke="#ffffff" stroke-width="1.6"/></svg><div class="t sans" style="left:3190px;top:971.59px;width:200px;text-align:right;font-size:12.3px;color:#bbbbbb">50911</div><div class="t sans" style="left:3334px;top:971.59px;width:200px;text-align:right;font-size:12.3px;color:#bbbbbb">115</div><div class="t sans" style="left:3477px;top:971.59px;width:200px;text-align:right;font-size:12.3px;color:#bbbbbb">516</div><div class="t sans" style="left:3621px;top:971.59px;width:200px;text-align:right;font-size:12.3px;color:#bbbbbb">75</div><div class="t sans" style="left:2329px;top:993.59px;width:200px;text-align:right;font-size:12.3px;color:#bbbbbb">33</div><div class="t sans" style="left:2473px;top:993.59px;width:200px;text-align:right;font-size:12.3px;color:#bbbbbb">10:37:41.327</div><div class="t sans" style="left:2684px;top:993.59px;font-size:12.3px;color:#bbbbbb">Thread Group 1-34</div><div class="t sans" style="left:2827px;top:993.59px;font-size:12.3px;color:#bbbbbb">HTTP Request</div><div class="t sans" style="left:2904px;top:993.59px;width:200px;text-align:right;font-size:12.3px;color:#bbbbbb">516</div><svg class="a" style="left:3174.5px;top:991.5px" width="14" height="16" viewBox="0 0 14 16"><path d="M6.8 0.6 Q9.6 2.4 13.2 2.6 V7.6 C13.2 11 10.6 13.6 6.8 15.4 C3 13.6 0.4 11 0.4 7.6 V2.6 Q4 2.4 6.8 0.6Z" fill="#1aa31a" stroke="#d8e8d8" stroke-width="0.9"/><path d="M6.8 2.2 Q9 3.5 11.8 3.7 V7.6 C11.8 10.4 9.8 12.6 6.8 14 Z" fill="#0b8a0b" opacity="0.6"/><path d="M3.8 7.4 L6 9.6 L10.2 5.2" fill="none" stroke="#ffffff" stroke-width="1.6"/></svg><div class="t sans" style="left:3190px;top:993.59px;width:200px;text-align:right;font-size:12.3px;color:#bbbbbb">50882</div><div class="t sans" style="left:3334px;top:993.59px;width:200px;text-align:right;font-size:12.3px;color:#bbbbbb">115</div><div class="t sans" style="left:3477px;top:993.59px;width:200px;text-align:right;font-size:12.3px;color:#bbbbbb">502</div><div class="t sans" style="left:3621px;top:993.59px;width:200px;text-align:right;font-size:12.3px;color:#bbbbbb">73</div><div class="t sans" style="left:2329px;top:1015.59px;width:200px;text-align:right;font-size:12.3px;color:#bbbbbb">34</div><div class="t sans" style="left:2473px;top:1015.59px;width:200px;text-align:right;font-size:12.3px;color:#bbbbbb">10:37:41.329</div><div class="t sans" style="left:2684px;top:1015.59px;font-size:12.3px;color:#bbbbbb">Thread Group 1-35</div><div class="t sans" style="left:2827px;top:1015.59px;font-size:12.3px;color:#bbbbbb">HTTP Request</div><div class="t sans" style="left:2904px;top:1015.59px;width:200px;text-align:right;font-size:12.3px;color:#bbbbbb">514</div><svg class="a" style="left:3174.5px;top:1013.5px" width="14" height="16" viewBox="0 0 14 16"><path d="M6.8 0.6 Q9.6 2.4 13.2 2.6 V7.6 C13.2 11 10.6 13.6 6.8 15.4 C3 13.6 0.4 11 0.4 7.6 V2.6 Q4 2.4 6.8 0.6Z" fill="#1aa31a" stroke="#d8e8d8" stroke-width="0.9"/><path d="M6.8 2.2 Q9 3.5 11.8 3.7 V7.6 C11.8 10.4 9.8 12.6 6.8 14 Z" fill="#0b8a0b" opacity="0.6"/><path d="M3.8 7.4 L6 9.6 L10.2 5.2" fill="none" stroke="#ffffff" stroke-width="1.6"/></svg><div class="t sans" style="left:3190px;top:1015.59px;width:200px;text-align:right;font-size:12.3px;color:#bbbbbb">50882</div><div class="t sans" style="left:3334px;top:1015.59px;width:200px;text-align:right;font-size:12.3px;color:#bbbbbb">115</div><div class="t sans" style="left:3477px;top:1015.59px;width:200px;text-align:right;font-size:12.3px;color:#bbbbbb">500</div><div class="t sans" style="left:3621px;top:1015.59px;width:200px;text-align:right;font-size:12.3px;color:#bbbbbb">68</div><div class="a" style="left:2394px;top:1049px;width:14px;height:14px;background:#43494a;border:1px solid #6b6b6b;border-radius:2px"></div><div class="t sans" style="left:2414.00px;top:1050.59px;font-size:12.3px;color:#bbbbbb;">Scroll automatically?</div><div class="a" style="left:2539px;top:1049px;width:14px;height:14px;background:#43494a;border:1px solid #6b6b6b;border-radius:2px"></div><div class="t sans" style="left:2559.00px;top:1050.59px;font-size:12.3px;color:#bbbbbb;">Child samples?</div><div class="t sans" style="left:2936.40px;top:1052.09px;font-size:12.3px;color:#bbbbbb;">No of Samples</div><div class="t sans" style="left:3026.40px;top:1052.09px;font-size:12.3px;color:#121212;">961477</div><div class="t sans" style="left:3133.50px;top:1052.09px;font-size:12.3px;color:#121212;">Latest Sample</div><div class="t sans" style="left:3220.70px;top:1052.09px;font-size:12.3px;color:#121212;">50</div><div class="t sans" style="left:3295.00px;top:1052.09px;font-size:12.3px;color:#1515f0;">Average</div><div class="t sans" style="left:3351.00px;top:1052.09px;font-size:12.3px;color:#1515f0;">227</div><div class="t sans" style="left:3425.40px;top:1052.09px;font-size:12.3px;color:#e0101a;">Deviation</div><div class="t sans" style="left:3487.50px;top:1052.09px;font-size:12.3px;color:#e0101a;">322</div><div class="a" style="left:0px;top:1156px;width:1920px;height:44px;background:linear-gradient(#3f444a,#3a3e44);"></div><div class="a" style="left:45px;top:1156px;width:50px;height:44px;background:#464a50;"></div><div class="a" style="left:149px;top:1156px;width:51px;height:44px;background:#464a50;"></div><div class="a" style="left:201px;top:1156px;width:50px;height:44px;background:#50545a;"></div><div class="a" style="left:201px;top:1156px;width:50px;height:3px;background:#7f8489;"></div><div class="a" style="left:253px;top:1156px;width:51px;height:44px;background:#464a50;"></div><div class="a" style="left:305px;top:1156px;width:51px;height:44px;background:#464a50;"></div><div class="a" style="left:357px;top:1156px;width:50px;height:44px;background:#3e6e8e;"></div><div class="a" style="left:357px;top:1156px;width:50px;height:3px;background:#3daee9;"></div><div class="a" style="left:409px;top:1156px;width:50px;height:44px;background:#464a50;"></div><div class="a" style="left:461px;top:1156px;width:50px;height:44px;background:#50545a;"></div><div class="a" style="left:461px;top:1156px;width:50px;height:3px;background:#7f8489;"></div><svg class="a" style="left:8px;top:1164px" width="28" height="28" viewBox="0 0 28 28"><circle cx="14" cy="14" r="14" fill="#eff0f1"/><g fill="#3a3f44"><circle cx="14" cy="14" r="7.2"/><rect x="12.2" y="3.5" width="3.6" height="5" transform="rotate(20 14 14)"/><rect x="12.2" y="3.5" width="3.6" height="5" transform="rotate(80 14 14)"/><rect x="12.2" y="3.5" width="3.6" height="5" transform="rotate(140 14 14)"/><rect x="12.2" y="3.5" width="3.6" height="5" transform="rotate(200 14 14)"/><rect x="12.2" y="3.5" width="3.6" height="5" transform="rotate(260 14 14)"/><rect x="12.2" y="3.5" width="3.6" height="5" transform="rotate(320 14 14)"/></g><circle cx="14" cy="14" r="5" fill="#eff0f1"/></svg><svg class="a" style="left:56px;top:1164px" width="28" height="28" viewBox="0 0 28 28"><rect x="0" y="0" width="28" height="28" fill="#2a2d31"/><rect x="0" y="0" width="28" height="1" fill="#777"/><rect x="3" y="9" width="17" height="2" fill="#3daee9"/><rect x="20" y="9.5" width="5" height="1" fill="#555"/><circle cx="20" cy="10" r="2.5" fill="#fff"/><rect x="3" y="17" width="7" height="2" fill="#3daee9"/><rect x="10" y="17.5" width="15" height="1" fill="#555"/><circle cx="10" cy="18" r="2.5" fill="#fff"/></svg><svg class="a" style="left:109px;top:1164px" width="25" height="28" viewBox="0 0 25 28"><path d="M7 8 Q7 1 12.5 1 Q18 1 18 8" fill="none" stroke="#1e9ff2" stroke-width="1.5"/><rect x="0" y="7" width="25" height="20" fill="#1aa1f5"/><path d="M12 13 L15 16 L12 19" stroke="#e8f4ff" stroke-width="1.5" fill="none"/><circle cx="10" cy="23" r="1" fill="#bfe3ff"/><circle cx="9" cy="18" r="0.8" fill="#bfe3ff"/></svg><svg class="a" style="left:159px;top:1164px" width="31" height="28" viewBox="0 0 31 28"><path d="M0 0 H13 L15 2 H31 V27 H0Z" fill="#2a7bb0"/><rect x="1" y="5" width="29" height="5" fill="#f2f2f2"/><path d="M0 10 H31 V27 H0Z" fill="#3ea3db"/><path d="M0 10 L17 27 H0Z" fill="#55b3e6"/></svg><svg class="a" style="left:210px;top:1162px" width="32" height="37" viewBox="0 0 32 37"><circle cx="16" cy="16" r="16" fill="#e53c2d"/><path d="M16 16 L29.9 8 A16 16 0 0 1 16 32Z" fill="#f6c02c"/><path d="M16 16 L16 32 A16 16 0 0 1 2.1 8Z" fill="#2aa44b"/><circle cx="16" cy="16" r="8" fill="#fff"/><circle cx="16" cy="16" r="6.2" fill="#1f6ee6"/><circle cx="15" cy="31.5" r="4.6" fill="#27ae60"/><path d="M15 28.5 V34.5 M12 31.5 H18" stroke="#fff" stroke-width="1.6"/></svg><svg class="a" style="left:263px;top:1163px" width="30" height="30" viewBox="0 0 30 30"><path d="M15 4 C23 4 28.5 10 28.5 17.5 C28.5 25 22.5 30.5 15 30.5 C7.5 30.5 1.5 25 1.5 17.5 C1.5 13 3 10 5 8 C5 10 6 11 7 11.5 C8 8 11 5 15 4Z" fill="#ff6a24"/><path d="M17 0.5 C22 3 28.5 8 28.5 17.5 C27 11 24 8 19 7 C20 5 19 2 17 0.5Z" fill="#ffd43a"/><path d="M5 8 C7 7 10 7.5 12 9 C9 9 7 10 6.5 12Z" fill="#ffb43a"/><circle cx="15.5" cy="18" r="6" fill="#8a3fd8"/><path d="M9.5 18 C8 21 10 26 15.5 26 C20 26 22 23 21.5 18 C20 22 17 23.5 14 22.5 C11 21.5 10 19 9.5 18Z" fill="#6a2cc0"/><path d="M1.5 17.5 C2 26 9 30.5 15 30.5 C23 30.5 28.5 25 28.5 18.5 C25 26 17 28 11 25.5 C6 23 4 20 1.5 17.5Z" fill="#e32a7c"/></svg><svg class="a" style="left:317px;top:1165px" width="26" height="35" viewBox="0 0 26 35"><rect x="0" y="0" width="26" height="26" fill="#2e86c8"/><rect x="2.5" y="2.5" width="21" height="21" fill="none" stroke="#e6f1fa" stroke-width="1.8"/><path d="M3 9 L7 9 L9 20 L12 10 L14 17 L16 11 L18 18 L19 18 V14 H23" fill="none" stroke="#fff" stroke-width="1.5"/><circle cx="12" cy="29.5" r="4.6" fill="#27ae60"/><path d="M12 26.5 V32.5 M9 29.5 H15" stroke="#fff" stroke-width="1.6"/></svg><svg class="a" style="left:368px;top:1164px" width="28" height="36" viewBox="0 0 28 36"><rect x="0" y="0" width="28" height="28" fill="#3a3f43"/><path d="M8 28 L28 8 V28Z" fill="#2b2f33"/><rect x="0" y="0" width="28" height="0.8" fill="#666"/><path d="M11 6.5 L18 14 L11 21.5" fill="none" stroke="#a9aeb2" stroke-width="1"/><circle cx="13" cy="30.5" r="4.6" fill="#27ae60"/><path d="M13 27.5 V33.5 M10 30.5 H16" stroke="#fff" stroke-width="1.6"/></svg><svg class="a" style="left:420px;top:1165px" width="27" height="27" viewBox="0 0 27 27"><defs><linearGradient id="gKr" x1="0" y1="0" x2="1" y2="1"><stop offset="0" stop-color="#22c8ff"/><stop offset="1" stop-color="#1a6fe8"/></linearGradient></defs><circle cx="13.5" cy="13.5" r="13.5" fill="url(#gKr)"/><path d="M4.5 7 Q10 3.5 14 4.5 Q18 3 23 5 Q16 7 13 11 Q11 13 12 15 L21.5 19.5 Q16 19 13 18.5 L14.5 24 Q10 20 8.5 15 Q9 11 12 8 Q8 7 4.5 7Z" fill="#e8edf2"/><circle cx="16" cy="8.2" r="2.3" fill="#1d6fe0"/><circle cx="10.8" cy="15.5" r="2.3" fill="#1d6fe0"/></svg><svg class="a" style="left:474px;top:1161px" width="22" height="34" viewBox="0 0 22 34"><defs><linearGradient id="fg2" x1="0" y1="1" x2="1" y2="0"><stop offset="0" stop-color="#6d1f8f"/><stop offset="0.3" stop-color="#c01f48"/><stop offset="0.6" stop-color="#e0352f"/><stop offset="1" stop-color="#f99b1c"/></linearGradient></defs><path d="M5.5 25 C5 19 9 11 13 6 C15.5 3 18 1 19.8 1.5 C20.8 3.5 20 8 17.5 13 C14.5 19 10 23.5 5.5 25Z" fill="url(#fg2)"/><path d="M3 32.5 L6 24" stroke="#7d4a9a" stroke-width="0.9"/></svg><svg class="a" style="left:1560px;top:1169px" width="20" height="20" viewBox="0 0 20 20"><circle cx="9" cy="9" r="8" fill="none" stroke="#e0e0e0" stroke-width="1"/><path d="M9 4 L13 9 H10.5 V14 H7.5 V9 H5Z" fill="#fff"/><circle cx="14.5" cy="15" r="2.8" fill="#3daee9"/></svg><svg class="a" style="left:1589px;top:1169px" width="20" height="20" viewBox="0 0 20 20"><rect x="1" y="7" width="18" height="11" fill="none" stroke="#e8e8e8" stroke-width="1.2"/><path d="M3 10 H17 M3 12.5 H17 M3 15 H17" stroke="#e8e8e8" stroke-width="1" stroke-dasharray="1.5 1"/><path d="M10 7 V3 L12 1" fill="none" stroke="#e8e8e8"/></svg><svg class="a" style="left:1622px;top:1169px" width="16" height="20" viewBox="0 0 16 20"><rect x="1.5" y="4" width="13" height="13" fill="none" stroke="#e8e8e8" stroke-width="1.2"/><rect x="4" y="1" width="8" height="4" fill="#e8e8e8"/><path d="M4 9 H12 M4 12 H9" stroke="#e8e8e8"/></svg><svg class="a" style="left:1653px;top:1170px" width="14" height="18" viewBox="0 0 14 18"><path d="M3 5 L10 12 L6.5 15.5 V1.5 L10 5 L3 12" fill="none" stroke="#e8e8e8" stroke-width="1.1"/></svg><svg class="a" style="left:1680px;top:1169px" width="18" height="18" viewBox="0 0 18 18"><rect x="1" y="1" width="16" height="12" fill="#e8e8e8"/><rect x="2.5" y="2.5" width="13" height="9" fill="#3b4045"/><path d="M4 4 L7 4 L4 7Z M14 10 L11 10 L14 7Z" fill="#e8e8e8"/><rect x="7" y="14" width="4" height="2" fill="#e8e8e8"/><rect x="5" y="16" width="8" height="1.2" fill="#e8e8e8"/></svg><svg class="a" style="left:1708px;top:1169px" width="22" height="18" viewBox="0 0 22 18"><path d="M1 6 Q11 -2 21 6 M4 9 Q11 3 18 9 M7 12 Q11 9 15 12" fill="none" stroke="#cfcfcf" stroke-width="1.1"/><circle cx="11" cy="15" r="1.6" fill="none" stroke="#e8e8e8"/></svg><svg class="a" style="left:1741px;top:1169px" width="18" height="18" viewBox="0 0 18 18"><path d="M1 6 H4 L8 2 V16 L4 12 H1Z" fill="#e8e8e8"/><path d="M11 5 Q14 9 11 13 M13 3 Q18 9 13 15" fill="none" stroke="#d0d0d0" stroke-width="1.1"/></svg><svg class="a" style="left:1770px;top:1173px" width="14" height="12" viewBox="0 0 14 12"><path d="M1 9 L7 3 L13 9" fill="none" stroke="#e8e8e8" stroke-width="1.2"/></svg><div class="t sans" style="left:1802.80px;top:1164.38px;font-size:15.5px;color:#f2f2f2;">10 h 43</div><div class="t sans" style="left:1796.00px;top:1180.33px;font-size:12.6px;color:#f2f2f2;">2025-09-23</div><div class="a" style="left:1886px;top:1170px;width:16px;height:16px;background:transparent;border:1.2px solid #e8e8e8"></div><div class="a" style="left:1888px;top:1183px;width:12px;height:1px;background:#e8e8e8;"></div></body></html>
